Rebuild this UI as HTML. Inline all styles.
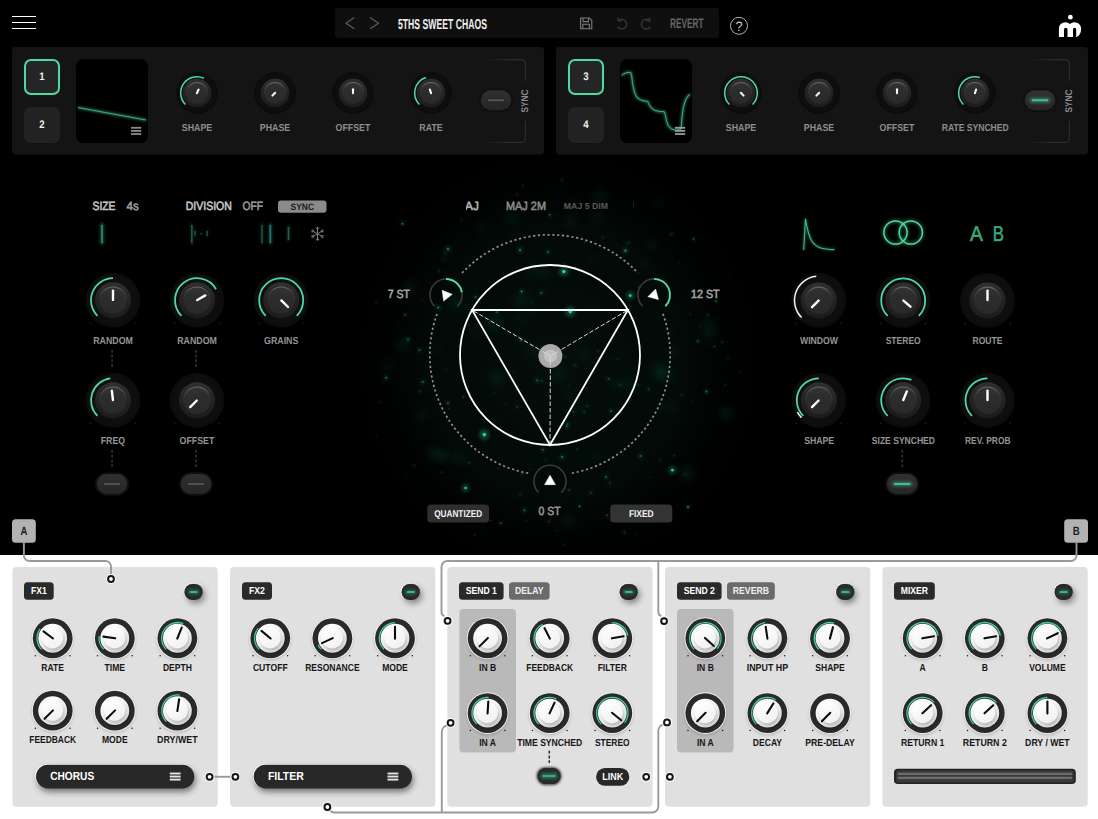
<!DOCTYPE html>
<html lang="en"><head><meta charset="utf-8"><title>Plugin UI</title>
<style>html,body{margin:0;padding:0;background:#fff;overflow:hidden}body{width:1098px;height:819px;font-family:"Liberation Sans",sans-serif}svg{display:block}text{white-space:pre}</style></head>
<body>
<svg width="1098" height="819" viewBox="0 0 1098 819" font-family="'Liberation Sans', sans-serif" text-rendering="geometricPrecision">
<defs>
<filter id="b1" x="-50%" y="-50%" width="200%" height="200%"><feGaussianBlur stdDeviation="1"/></filter>
<filter id="b2" x="-50%" y="-50%" width="200%" height="200%"><feGaussianBlur stdDeviation="1.6"/></filter>
<filter id="b3" x="-50%" y="-50%" width="200%" height="200%"><feGaussianBlur stdDeviation="3"/></filter>
<filter id="b6" x="-50%" y="-50%" width="200%" height="200%"><feGaussianBlur stdDeviation="6"/></filter>
<filter id="s1" x="-100%" y="-100%" width="300%" height="300%"><feGaussianBlur stdDeviation="0.7"/></filter>
<filter id="s2" x="-100%" y="-100%" width="300%" height="300%"><feGaussianBlur stdDeviation="1.8"/></filter>
<filter id="s3" x="-100%" y="-100%" width="300%" height="300%"><feGaussianBlur stdDeviation="4"/></filter>
<radialGradient id="dkOuter" cx="50%" cy="50%" r="50%"><stop offset="0" stop-color="#101010"/><stop offset="0.85" stop-color="#0e0e0e"/><stop offset="1" stop-color="#0b0b0b"/></radialGradient>
<linearGradient id="dkRing" x1="0" y1="0" x2="0" y2="1"><stop offset="0" stop-color="#303030"/><stop offset="0.5" stop-color="#232323"/><stop offset="1" stop-color="#1c1c1c"/></linearGradient>
<linearGradient id="dkRim" x1="0" y1="0" x2="0" y2="1"><stop offset="0" stop-color="#6a6a6a"/><stop offset="0.3" stop-color="#3c3c3c"/><stop offset="0.6" stop-color="#272727"/><stop offset="1" stop-color="#222222"/></linearGradient>
<linearGradient id="dkCap" x1="0" y1="0" x2="0" y2="1"><stop offset="0" stop-color="#343434"/><stop offset="0.3" stop-color="#2d2d2d"/><stop offset="1" stop-color="#292929"/></linearGradient>
<linearGradient id="tgFill" x1="0" y1="0" x2="0" y2="1"><stop offset="0" stop-color="#303030"/><stop offset="1" stop-color="#262626"/></linearGradient>
<linearGradient id="ltCap" x1="0.2" y1="0" x2="0.8" y2="1"><stop offset="0" stop-color="#ffffff"/><stop offset="0.55" stop-color="#ededed"/><stop offset="1" stop-color="#d2d2d2"/></linearGradient>
<linearGradient id="ltCapIn" x1="0.2" y1="0" x2="0.8" y2="1"><stop offset="0" stop-color="#ffffff"/><stop offset="1" stop-color="#f0f0f0"/></linearGradient>
<radialGradient id="nebula" cx="50%" cy="50%" r="50%"><stop offset="0" stop-color="#06140e" stop-opacity="0.7"/><stop offset="0.6" stop-color="#040f0b" stop-opacity="0.65"/><stop offset="1" stop-color="#000" stop-opacity="0"/></radialGradient>
<linearGradient id="brk" x1="0" y1="0" x2="1" y2="0"><stop offset="0" stop-color="#2c2c2c" stop-opacity="0"/><stop offset="0.6" stop-color="#2c2c2c"/><stop offset="1" stop-color="#2c2c2c"/></linearGradient>
<clipPath id="clipMaj"><rect x="466" y="195" width="80" height="22"/></clipPath>
</defs>
<rect x="0.00" y="0.00" width="1098.00" height="819.00" rx="0" fill="#ffffff" />
<rect x="0.00" y="0.00" width="1098.00" height="555.00" rx="0" fill="#000000" />
<clipPath id="clipNeb"><rect x="362" y="158" width="396" height="397"/></clipPath>
<g clip-path="url(#clipNeb)">
<ellipse cx="557" cy="362" rx="215" ry="225" fill="url(#nebula)"/>
<g fill="#2fd597">
<circle cx="563.8" cy="271.5" r="5.1" opacity="0.25" filter="url(#s2)"/>
<circle cx="563.8" cy="271.5" r="1.7" opacity="1.00" filter="url(#s1)"/>
<circle cx="570.3" cy="311.6" r="5.4" opacity="0.25" filter="url(#s2)"/>
<circle cx="570.3" cy="311.6" r="1.8" opacity="1.00" filter="url(#s1)"/>
<circle cx="630.2" cy="295.6" r="4.5" opacity="0.21" filter="url(#s2)"/>
<circle cx="630.2" cy="295.6" r="1.5" opacity="0.85" filter="url(#s1)"/>
<circle cx="484.3" cy="434.6" r="5.4" opacity="0.25" filter="url(#s2)"/>
<circle cx="484.3" cy="434.6" r="1.8" opacity="1.00" filter="url(#s1)"/>
<circle cx="672.4" cy="470.2" r="4.2" opacity="0.23" filter="url(#s2)"/>
<circle cx="672.4" cy="470.2" r="1.4" opacity="0.90" filter="url(#s1)"/>
<circle cx="465.6" cy="488.0" r="3.9" opacity="0.23" filter="url(#s2)"/>
<circle cx="465.6" cy="488.0" r="1.3" opacity="0.90" filter="url(#s1)"/>
<circle cx="521.6" cy="291.2" r="2.1" opacity="0.23" filter="url(#s2)"/>
<circle cx="521.6" cy="291.2" r="0.7" opacity="0.90" filter="url(#s1)"/>
<circle cx="625.4" cy="250.7" r="3.3" opacity="0.15" filter="url(#s2)"/>
<circle cx="625.4" cy="250.7" r="1.1" opacity="0.60" filter="url(#s1)"/>
<circle cx="402.5" cy="223.7" r="3.0" opacity="0.11" filter="url(#s2)"/>
<circle cx="402.5" cy="223.7" r="1.0" opacity="0.45" filter="url(#s1)"/>
<circle cx="422.7" cy="382.0" r="3.0" opacity="0.10" filter="url(#s2)"/>
<circle cx="422.7" cy="382.0" r="1.0" opacity="0.40" filter="url(#s1)"/>
<circle cx="408.0" cy="339.5" r="3.0" opacity="0.10" filter="url(#s2)"/>
<circle cx="408.0" cy="339.5" r="1.0" opacity="0.40" filter="url(#s1)"/>
<circle cx="706.4" cy="391.6" r="3.0" opacity="0.11" filter="url(#s2)"/>
<circle cx="706.4" cy="391.6" r="1.0" opacity="0.45" filter="url(#s1)"/>
<circle cx="697.8" cy="341.0" r="1.8" opacity="0.23" filter="url(#s2)"/>
<circle cx="697.8" cy="341.0" r="0.6" opacity="0.90" filter="url(#s1)"/>
<circle cx="579.5" cy="506.4" r="1.8" opacity="0.20" filter="url(#s2)"/>
<circle cx="579.5" cy="506.4" r="0.6" opacity="0.80" filter="url(#s1)"/>
<circle cx="611.0" cy="411.0" r="2.1" opacity="0.20" filter="url(#s2)"/>
<circle cx="611.0" cy="411.0" r="0.7" opacity="0.80" filter="url(#s1)"/>
<circle cx="497.0" cy="312.0" r="2.1" opacity="0.17" filter="url(#s2)"/>
<circle cx="497.0" cy="312.0" r="0.7" opacity="0.70" filter="url(#s1)"/>
<circle cx="688.0" cy="507.0" r="2.4" opacity="0.20" filter="url(#s2)"/>
<circle cx="688.0" cy="507.0" r="0.8" opacity="0.80" filter="url(#s1)"/>
<circle cx="606.0" cy="477.0" r="2.1" opacity="0.17" filter="url(#s2)"/>
<circle cx="606.0" cy="477.0" r="0.7" opacity="0.70" filter="url(#s1)"/>
<circle cx="448.0" cy="403.0" r="2.1" opacity="0.17" filter="url(#s2)"/>
<circle cx="448.0" cy="403.0" r="0.7" opacity="0.70" filter="url(#s1)"/>
<circle cx="548.0" cy="252.0" r="2.4" opacity="0.15" filter="url(#s2)"/>
<circle cx="548.0" cy="252.0" r="0.8" opacity="0.60" filter="url(#s1)"/>
<circle cx="448.0" cy="249.0" r="3.3" opacity="0.14" filter="url(#s2)"/>
<circle cx="448.0" cy="249.0" r="1.1" opacity="0.55" filter="url(#s1)"/>
<circle cx="520.0" cy="250.0" r="3.0" opacity="0.15" filter="url(#s2)"/>
<circle cx="520.0" cy="250.0" r="1.0" opacity="0.60" filter="url(#s1)"/>
<circle cx="542.1" cy="381.0" r="2.4" opacity="0.07" filter="url(#s2)"/>
<circle cx="542.1" cy="381.0" r="0.8" opacity="0.29" filter="url(#s1)"/>
<circle cx="693.5" cy="238.9" r="3.0" opacity="0.08" filter="url(#s2)"/>
<circle cx="693.5" cy="238.9" r="1.0" opacity="0.30" filter="url(#s1)"/>
<circle cx="602.8" cy="237.5" r="2.4" opacity="0.06" filter="url(#s2)"/>
<circle cx="602.8" cy="237.5" r="0.8" opacity="0.24" filter="url(#s1)"/>
<circle cx="406.1" cy="476.9" r="1.2" opacity="0.09" filter="url(#s2)"/>
<circle cx="406.1" cy="476.9" r="0.4" opacity="0.35" filter="url(#s1)"/>
<circle cx="521.0" cy="340.0" r="3.0" opacity="0.09" filter="url(#s2)"/>
<circle cx="521.0" cy="340.0" r="1.0" opacity="0.37" filter="url(#s1)"/>
<circle cx="606.3" cy="485.4" r="1.2" opacity="0.04" filter="url(#s2)"/>
<circle cx="606.3" cy="485.4" r="0.4" opacity="0.14" filter="url(#s1)"/>
<circle cx="443.5" cy="258.9" r="1.2" opacity="0.10" filter="url(#s2)"/>
<circle cx="443.5" cy="258.9" r="0.4" opacity="0.42" filter="url(#s1)"/>
<circle cx="494.7" cy="392.9" r="1.5" opacity="0.08" filter="url(#s2)"/>
<circle cx="494.7" cy="392.9" r="0.5" opacity="0.32" filter="url(#s1)"/>
<circle cx="612.7" cy="357.9" r="1.2" opacity="0.07" filter="url(#s2)"/>
<circle cx="612.7" cy="357.9" r="0.4" opacity="0.29" filter="url(#s1)"/>
<circle cx="638.1" cy="287.1" r="1.5" opacity="0.08" filter="url(#s2)"/>
<circle cx="638.1" cy="287.1" r="0.5" opacity="0.31" filter="url(#s1)"/>
<circle cx="383.2" cy="382.2" r="1.2" opacity="0.07" filter="url(#s2)"/>
<circle cx="383.2" cy="382.2" r="0.4" opacity="0.27" filter="url(#s1)"/>
<circle cx="690.3" cy="314.4" r="1.2" opacity="0.11" filter="url(#s2)"/>
<circle cx="690.3" cy="314.4" r="0.4" opacity="0.44" filter="url(#s1)"/>
<circle cx="714.3" cy="346.5" r="2.4" opacity="0.07" filter="url(#s2)"/>
<circle cx="714.3" cy="346.5" r="0.8" opacity="0.28" filter="url(#s1)"/>
<circle cx="584.9" cy="242.2" r="1.8" opacity="0.06" filter="url(#s2)"/>
<circle cx="584.9" cy="242.2" r="0.6" opacity="0.25" filter="url(#s1)"/>
<circle cx="526.2" cy="520.4" r="1.5" opacity="0.05" filter="url(#s2)"/>
<circle cx="526.2" cy="520.4" r="0.5" opacity="0.21" filter="url(#s1)"/>
<circle cx="671.7" cy="234.2" r="3.0" opacity="0.05" filter="url(#s2)"/>
<circle cx="671.7" cy="234.2" r="1.0" opacity="0.19" filter="url(#s1)"/>
<circle cx="563.3" cy="544.3" r="1.5" opacity="0.07" filter="url(#s2)"/>
<circle cx="563.3" cy="544.3" r="0.5" opacity="0.28" filter="url(#s1)"/>
<circle cx="516.3" cy="317.6" r="1.5" opacity="0.03" filter="url(#s2)"/>
<circle cx="516.3" cy="317.6" r="0.5" opacity="0.12" filter="url(#s1)"/>
<circle cx="594.9" cy="549.2" r="1.2" opacity="0.05" filter="url(#s2)"/>
<circle cx="594.9" cy="549.2" r="0.4" opacity="0.20" filter="url(#s1)"/>
<circle cx="520.2" cy="494.1" r="3.0" opacity="0.04" filter="url(#s2)"/>
<circle cx="520.2" cy="494.1" r="1.0" opacity="0.16" filter="url(#s1)"/>
<circle cx="469.1" cy="462.7" r="1.8" opacity="0.11" filter="url(#s2)"/>
<circle cx="469.1" cy="462.7" r="0.6" opacity="0.44" filter="url(#s1)"/>
<circle cx="517.2" cy="194.5" r="1.5" opacity="0.09" filter="url(#s2)"/>
<circle cx="517.2" cy="194.5" r="0.5" opacity="0.34" filter="url(#s1)"/>
<circle cx="463.4" cy="396.9" r="1.8" opacity="0.09" filter="url(#s2)"/>
<circle cx="463.4" cy="396.9" r="0.6" opacity="0.36" filter="url(#s1)"/>
<circle cx="419.8" cy="391.5" r="3.0" opacity="0.04" filter="url(#s2)"/>
<circle cx="419.8" cy="391.5" r="1.0" opacity="0.17" filter="url(#s1)"/>
<circle cx="517.2" cy="406.9" r="1.8" opacity="0.12" filter="url(#s2)"/>
<circle cx="517.2" cy="406.9" r="0.6" opacity="0.47" filter="url(#s1)"/>
<circle cx="679.5" cy="261.8" r="1.5" opacity="0.05" filter="url(#s2)"/>
<circle cx="679.5" cy="261.8" r="0.5" opacity="0.18" filter="url(#s1)"/>
<circle cx="608.5" cy="378.7" r="2.4" opacity="0.11" filter="url(#s2)"/>
<circle cx="608.5" cy="378.7" r="0.8" opacity="0.46" filter="url(#s1)"/>
<circle cx="598.9" cy="327.8" r="1.2" opacity="0.04" filter="url(#s2)"/>
<circle cx="598.9" cy="327.8" r="0.4" opacity="0.16" filter="url(#s1)"/>
<circle cx="564.6" cy="264.0" r="2.4" opacity="0.05" filter="url(#s2)"/>
<circle cx="564.6" cy="264.0" r="0.8" opacity="0.22" filter="url(#s1)"/>
<circle cx="681.7" cy="395.0" r="1.8" opacity="0.08" filter="url(#s2)"/>
<circle cx="681.7" cy="395.0" r="0.6" opacity="0.32" filter="url(#s1)"/>
<circle cx="419.5" cy="350.1" r="3.0" opacity="0.09" filter="url(#s2)"/>
<circle cx="419.5" cy="350.1" r="1.0" opacity="0.35" filter="url(#s1)"/>
<circle cx="477.4" cy="518.3" r="1.5" opacity="0.10" filter="url(#s2)"/>
<circle cx="477.4" cy="518.3" r="0.5" opacity="0.40" filter="url(#s1)"/>
<circle cx="398.0" cy="324.0" r="1.5" opacity="0.04" filter="url(#s2)"/>
<circle cx="398.0" cy="324.0" r="0.5" opacity="0.14" filter="url(#s1)"/>
<circle cx="438.3" cy="307.6" r="3.0" opacity="0.12" filter="url(#s2)"/>
<circle cx="438.3" cy="307.6" r="1.0" opacity="0.49" filter="url(#s1)"/>
<circle cx="541.3" cy="293.1" r="3.0" opacity="0.09" filter="url(#s2)"/>
<circle cx="541.3" cy="293.1" r="1.0" opacity="0.34" filter="url(#s1)"/>
<circle cx="635.6" cy="535.7" r="1.2" opacity="0.09" filter="url(#s2)"/>
<circle cx="635.6" cy="535.7" r="0.4" opacity="0.35" filter="url(#s1)"/>
<circle cx="489.0" cy="218.5" r="1.2" opacity="0.04" filter="url(#s2)"/>
<circle cx="489.0" cy="218.5" r="0.4" opacity="0.15" filter="url(#s1)"/>
<circle cx="577.3" cy="449.0" r="1.5" opacity="0.11" filter="url(#s2)"/>
<circle cx="577.3" cy="449.0" r="0.5" opacity="0.42" filter="url(#s1)"/>
<circle cx="716.0" cy="301.1" r="2.4" opacity="0.12" filter="url(#s2)"/>
<circle cx="716.0" cy="301.1" r="0.8" opacity="0.46" filter="url(#s1)"/>
<circle cx="699.5" cy="326.2" r="1.2" opacity="0.11" filter="url(#s2)"/>
<circle cx="699.5" cy="326.2" r="0.4" opacity="0.45" filter="url(#s1)"/>
<circle cx="587.4" cy="406.0" r="2.4" opacity="0.07" filter="url(#s2)"/>
<circle cx="587.4" cy="406.0" r="0.8" opacity="0.26" filter="url(#s1)"/>
<circle cx="468.7" cy="325.8" r="1.8" opacity="0.07" filter="url(#s2)"/>
<circle cx="468.7" cy="325.8" r="0.6" opacity="0.27" filter="url(#s1)"/>
<circle cx="648.4" cy="389.1" r="2.4" opacity="0.07" filter="url(#s2)"/>
<circle cx="648.4" cy="389.1" r="0.8" opacity="0.30" filter="url(#s1)"/>
<circle cx="575.5" cy="365.2" r="3.0" opacity="0.03" filter="url(#s2)"/>
<circle cx="575.5" cy="365.2" r="1.0" opacity="0.13" filter="url(#s1)"/>
<circle cx="598.1" cy="350.7" r="1.5" opacity="0.12" filter="url(#s2)"/>
<circle cx="598.1" cy="350.7" r="0.5" opacity="0.48" filter="url(#s1)"/>
<circle cx="414.4" cy="465.5" r="2.4" opacity="0.05" filter="url(#s2)"/>
<circle cx="414.4" cy="465.5" r="0.8" opacity="0.22" filter="url(#s1)"/>
<circle cx="627.0" cy="243.8" r="1.5" opacity="0.10" filter="url(#s2)"/>
<circle cx="627.0" cy="243.8" r="0.5" opacity="0.41" filter="url(#s1)"/>
<circle cx="500.8" cy="523.2" r="2.4" opacity="0.11" filter="url(#s2)"/>
<circle cx="500.8" cy="523.2" r="0.8" opacity="0.46" filter="url(#s1)"/>
<circle cx="494.9" cy="421.7" r="1.5" opacity="0.09" filter="url(#s2)"/>
<circle cx="494.9" cy="421.7" r="0.5" opacity="0.36" filter="url(#s1)"/>
<circle cx="674.2" cy="455.8" r="1.5" opacity="0.11" filter="url(#s2)"/>
<circle cx="674.2" cy="455.8" r="0.5" opacity="0.45" filter="url(#s1)"/>
<circle cx="516.5" cy="389.9" r="1.8" opacity="0.05" filter="url(#s2)"/>
<circle cx="516.5" cy="389.9" r="0.6" opacity="0.20" filter="url(#s1)"/>
<circle cx="422.6" cy="300.7" r="1.2" opacity="0.10" filter="url(#s2)"/>
<circle cx="422.6" cy="300.7" r="0.4" opacity="0.39" filter="url(#s1)"/>
<circle cx="729.2" cy="272.3" r="1.5" opacity="0.04" filter="url(#s2)"/>
<circle cx="729.2" cy="272.3" r="0.5" opacity="0.16" filter="url(#s1)"/>
<circle cx="549.2" cy="521.5" r="2.4" opacity="0.07" filter="url(#s2)"/>
<circle cx="549.2" cy="521.5" r="0.8" opacity="0.27" filter="url(#s1)"/>
<circle cx="567.5" cy="424.1" r="3.0" opacity="0.07" filter="url(#s2)"/>
<circle cx="567.5" cy="424.1" r="1.0" opacity="0.29" filter="url(#s1)"/>
<circle cx="638.4" cy="385.1" r="1.8" opacity="0.09" filter="url(#s2)"/>
<circle cx="638.4" cy="385.1" r="0.6" opacity="0.37" filter="url(#s1)"/>
<circle cx="584.1" cy="412.1" r="2.4" opacity="0.07" filter="url(#s2)"/>
<circle cx="584.1" cy="412.1" r="0.8" opacity="0.29" filter="url(#s1)"/>
<circle cx="461.3" cy="220.1" r="1.2" opacity="0.12" filter="url(#s2)"/>
<circle cx="461.3" cy="220.1" r="0.4" opacity="0.49" filter="url(#s1)"/>
<circle cx="573.3" cy="411.7" r="1.8" opacity="0.12" filter="url(#s2)"/>
<circle cx="573.3" cy="411.7" r="0.6" opacity="0.48" filter="url(#s1)"/>
<circle cx="629.4" cy="242.5" r="2.4" opacity="0.05" filter="url(#s2)"/>
<circle cx="629.4" cy="242.5" r="0.8" opacity="0.22" filter="url(#s1)"/>
<circle cx="640.5" cy="455.9" r="3.0" opacity="0.10" filter="url(#s2)"/>
<circle cx="640.5" cy="455.9" r="1.0" opacity="0.39" filter="url(#s1)"/>
<circle cx="439.3" cy="270.6" r="1.8" opacity="0.08" filter="url(#s2)"/>
<circle cx="439.3" cy="270.6" r="0.6" opacity="0.33" filter="url(#s1)"/>
<circle cx="728.0" cy="358.2" r="1.5" opacity="0.07" filter="url(#s2)"/>
<circle cx="728.0" cy="358.2" r="0.5" opacity="0.27" filter="url(#s1)"/>
<circle cx="669.8" cy="514.0" r="1.2" opacity="0.07" filter="url(#s2)"/>
<circle cx="669.8" cy="514.0" r="0.4" opacity="0.28" filter="url(#s1)"/>
<circle cx="707.6" cy="315.0" r="2.4" opacity="0.07" filter="url(#s2)"/>
<circle cx="707.6" cy="315.0" r="0.8" opacity="0.29" filter="url(#s1)"/>
<circle cx="607.2" cy="515.4" r="2.4" opacity="0.08" filter="url(#s2)"/>
<circle cx="607.2" cy="515.4" r="0.8" opacity="0.33" filter="url(#s1)"/>
<circle cx="617.4" cy="359.0" r="1.8" opacity="0.07" filter="url(#s2)"/>
<circle cx="617.4" cy="359.0" r="0.6" opacity="0.30" filter="url(#s1)"/>
<circle cx="616.9" cy="244.7" r="1.2" opacity="0.05" filter="url(#s2)"/>
<circle cx="616.9" cy="244.7" r="0.4" opacity="0.20" filter="url(#s1)"/>
<circle cx="739.5" cy="372.2" r="1.8" opacity="0.05" filter="url(#s2)"/>
<circle cx="739.5" cy="372.2" r="0.6" opacity="0.22" filter="url(#s1)"/>
<circle cx="561.8" cy="180.3" r="1.8" opacity="0.08" filter="url(#s2)"/>
<circle cx="561.8" cy="180.3" r="0.6" opacity="0.33" filter="url(#s1)"/>
<circle cx="660.9" cy="353.2" r="1.2" opacity="0.05" filter="url(#s2)"/>
<circle cx="660.9" cy="353.2" r="0.4" opacity="0.20" filter="url(#s1)"/>
<circle cx="698.2" cy="330.7" r="1.2" opacity="0.05" filter="url(#s2)"/>
<circle cx="698.2" cy="330.7" r="0.4" opacity="0.19" filter="url(#s1)"/>
<circle cx="498.0" cy="468.6" r="1.5" opacity="0.07" filter="url(#s2)"/>
<circle cx="498.0" cy="468.6" r="0.5" opacity="0.30" filter="url(#s1)"/>
<circle cx="566.8" cy="426.3" r="2.4" opacity="0.12" filter="url(#s2)"/>
<circle cx="566.8" cy="426.3" r="0.8" opacity="0.48" filter="url(#s1)"/>
<circle cx="557.2" cy="530.5" r="1.2" opacity="0.10" filter="url(#s2)"/>
<circle cx="557.2" cy="530.5" r="0.4" opacity="0.41" filter="url(#s1)"/>
<circle cx="537.2" cy="380.6" r="3.0" opacity="0.09" filter="url(#s2)"/>
<circle cx="537.2" cy="380.6" r="1.0" opacity="0.36" filter="url(#s1)"/>
<circle cx="568.6" cy="490.0" r="3.0" opacity="0.05" filter="url(#s2)"/>
<circle cx="568.6" cy="490.0" r="1.0" opacity="0.22" filter="url(#s1)"/>
<circle cx="624.4" cy="532.6" r="3.0" opacity="0.05" filter="url(#s2)"/>
<circle cx="624.4" cy="532.6" r="1.0" opacity="0.20" filter="url(#s1)"/>
<circle cx="569.1" cy="386.0" r="1.5" opacity="0.07" filter="url(#s2)"/>
<circle cx="569.1" cy="386.0" r="0.5" opacity="0.28" filter="url(#s1)"/>
<circle cx="513.8" cy="372.7" r="1.2" opacity="0.08" filter="url(#s2)"/>
<circle cx="513.8" cy="372.7" r="0.4" opacity="0.32" filter="url(#s1)"/>
<circle cx="522.6" cy="473.6" r="3.0" opacity="0.04" filter="url(#s2)"/>
<circle cx="522.6" cy="473.6" r="1.0" opacity="0.17" filter="url(#s1)"/>
<circle cx="722.0" cy="342.2" r="2.4" opacity="0.06" filter="url(#s2)"/>
<circle cx="722.0" cy="342.2" r="0.8" opacity="0.22" filter="url(#s1)"/>
<circle cx="549.9" cy="214.8" r="2.4" opacity="0.12" filter="url(#s2)"/>
<circle cx="549.9" cy="214.8" r="0.8" opacity="0.46" filter="url(#s1)"/>
<circle cx="569.4" cy="207.7" r="2.4" opacity="0.09" filter="url(#s2)"/>
<circle cx="569.4" cy="207.7" r="0.8" opacity="0.35" filter="url(#s1)"/>
<circle cx="445.0" cy="253.3" r="1.8" opacity="0.06" filter="url(#s2)"/>
<circle cx="445.0" cy="253.3" r="0.6" opacity="0.24" filter="url(#s1)"/>
<circle cx="505.6" cy="404.0" r="1.2" opacity="0.08" filter="url(#s2)"/>
<circle cx="505.6" cy="404.0" r="0.4" opacity="0.31" filter="url(#s1)"/>
<circle cx="590.9" cy="493.1" r="3.0" opacity="0.05" filter="url(#s2)"/>
<circle cx="590.9" cy="493.1" r="1.0" opacity="0.22" filter="url(#s1)"/>
<circle cx="446.3" cy="369.7" r="2.4" opacity="0.03" filter="url(#s2)"/>
<circle cx="446.3" cy="369.7" r="0.8" opacity="0.13" filter="url(#s1)"/>
<circle cx="610.0" cy="482.9" r="3.0" opacity="0.05" filter="url(#s2)"/>
<circle cx="610.0" cy="482.9" r="1.0" opacity="0.18" filter="url(#s1)"/>
<circle cx="448.8" cy="408.4" r="1.5" opacity="0.08" filter="url(#s2)"/>
<circle cx="448.8" cy="408.4" r="0.5" opacity="0.32" filter="url(#s1)"/>
<circle cx="692.1" cy="400.9" r="1.5" opacity="0.05" filter="url(#s2)"/>
<circle cx="692.1" cy="400.9" r="0.5" opacity="0.21" filter="url(#s1)"/>
<circle cx="650.5" cy="477.2" r="1.5" opacity="0.06" filter="url(#s2)"/>
<circle cx="650.5" cy="477.2" r="0.5" opacity="0.24" filter="url(#s1)"/>
<circle cx="490.4" cy="520.3" r="1.5" opacity="0.10" filter="url(#s2)"/>
<circle cx="490.4" cy="520.3" r="0.5" opacity="0.42" filter="url(#s1)"/>
<circle cx="445.1" cy="203.2" r="1.5" opacity="0.04" filter="url(#s2)"/>
<circle cx="445.1" cy="203.2" r="0.5" opacity="0.17" filter="url(#s1)"/>
<circle cx="405.1" cy="315.0" r="2.4" opacity="0.11" filter="url(#s2)"/>
<circle cx="405.1" cy="315.0" r="0.8" opacity="0.44" filter="url(#s1)"/>
<circle cx="530.5" cy="469.3" r="1.5" opacity="0.05" filter="url(#s2)"/>
<circle cx="530.5" cy="469.3" r="0.5" opacity="0.20" filter="url(#s1)"/>
<circle cx="608.1" cy="472.8" r="1.2" opacity="0.05" filter="url(#s2)"/>
<circle cx="608.1" cy="472.8" r="0.4" opacity="0.20" filter="url(#s1)"/>
<circle cx="628.6" cy="516.0" r="1.8" opacity="0.04" filter="url(#s2)"/>
<circle cx="628.6" cy="516.0" r="0.6" opacity="0.16" filter="url(#s1)"/>
<circle cx="562.1" cy="457.1" r="3.0" opacity="0.12" filter="url(#s2)"/>
<circle cx="562.1" cy="457.1" r="1.0" opacity="0.50" filter="url(#s1)"/>
<circle cx="685.2" cy="474.3" r="2.4" opacity="0.04" filter="url(#s2)"/>
<circle cx="685.2" cy="474.3" r="0.8" opacity="0.16" filter="url(#s1)"/>
<circle cx="386.1" cy="377.8" r="3.0" opacity="0.12" filter="url(#s2)"/>
<circle cx="386.1" cy="377.8" r="1.0" opacity="0.46" filter="url(#s1)"/>
<circle cx="553.0" cy="238.8" r="1.2" opacity="0.05" filter="url(#s2)"/>
<circle cx="553.0" cy="238.8" r="0.4" opacity="0.20" filter="url(#s1)"/>
<circle cx="545.7" cy="459.7" r="1.8" opacity="0.07" filter="url(#s2)"/>
<circle cx="545.7" cy="459.7" r="0.6" opacity="0.27" filter="url(#s1)"/>
<circle cx="532.3" cy="302.2" r="1.5" opacity="0.09" filter="url(#s2)"/>
<circle cx="532.3" cy="302.2" r="0.5" opacity="0.35" filter="url(#s1)"/>
<circle cx="377.0" cy="435.2" r="1.5" opacity="0.05" filter="url(#s2)"/>
<circle cx="377.0" cy="435.2" r="0.5" opacity="0.19" filter="url(#s1)"/>
<circle cx="542.7" cy="449.9" r="2.4" opacity="0.12" filter="url(#s2)"/>
<circle cx="542.7" cy="449.9" r="0.8" opacity="0.47" filter="url(#s1)"/>
<circle cx="599.4" cy="202.4" r="1.2" opacity="0.06" filter="url(#s2)"/>
<circle cx="599.4" cy="202.4" r="0.4" opacity="0.24" filter="url(#s1)"/>
<circle cx="725.3" cy="384.8" r="1.5" opacity="0.08" filter="url(#s2)"/>
<circle cx="725.3" cy="384.8" r="0.5" opacity="0.31" filter="url(#s1)"/>
<circle cx="469.1" cy="515.9" r="1.5" opacity="0.11" filter="url(#s2)"/>
<circle cx="469.1" cy="515.9" r="0.5" opacity="0.43" filter="url(#s1)"/>
<circle cx="524.5" cy="510.3" r="3.0" opacity="0.10" filter="url(#s2)"/>
<circle cx="524.5" cy="510.3" r="1.0" opacity="0.38" filter="url(#s1)"/>
<circle cx="660.5" cy="459.8" r="2.4" opacity="0.05" filter="url(#s2)"/>
<circle cx="660.5" cy="459.8" r="0.8" opacity="0.20" filter="url(#s1)"/>
<circle cx="441.5" cy="472.2" r="1.8" opacity="0.07" filter="url(#s2)"/>
<circle cx="441.5" cy="472.2" r="0.6" opacity="0.30" filter="url(#s1)"/>
<circle cx="376.0" cy="302.6" r="3.0" opacity="0.03" filter="url(#s2)"/>
<circle cx="376.0" cy="302.6" r="1.0" opacity="0.14" filter="url(#s1)"/>
<circle cx="474.6" cy="535.2" r="1.8" opacity="0.06" filter="url(#s2)"/>
<circle cx="474.6" cy="535.2" r="0.6" opacity="0.25" filter="url(#s1)"/>
<circle cx="620.1" cy="384.7" r="3.0" opacity="0.04" filter="url(#s2)"/>
<circle cx="620.1" cy="384.7" r="1.0" opacity="0.15" filter="url(#s1)"/>
<circle cx="565.5" cy="357.1" r="1.5" opacity="0.10" filter="url(#s2)"/>
<circle cx="565.5" cy="357.1" r="0.5" opacity="0.39" filter="url(#s1)"/>
<circle cx="380.6" cy="402.3" r="1.5" opacity="0.05" filter="url(#s2)"/>
<circle cx="380.6" cy="402.3" r="0.5" opacity="0.22" filter="url(#s1)"/>
<circle cx="523.0" cy="185.4" r="1.5" opacity="0.09" filter="url(#s2)"/>
<circle cx="523.0" cy="185.4" r="0.5" opacity="0.37" filter="url(#s1)"/>
<circle cx="475.7" cy="296.9" r="3.0" opacity="0.08" filter="url(#s2)"/>
<circle cx="475.7" cy="296.9" r="1.0" opacity="0.31" filter="url(#s1)"/>
<circle cx="735.6" cy="384.1" r="1.2" opacity="0.09" filter="url(#s2)"/>
<circle cx="735.6" cy="384.1" r="0.4" opacity="0.36" filter="url(#s1)"/>
</g>
<g fill="#1a8a62">
<circle cx="595.1" cy="455.9" r="3.2" opacity="0.14" filter="url(#s3)"/>
<circle cx="437.6" cy="349.6" r="3.8" opacity="0.10" filter="url(#s3)"/>
<circle cx="600.0" cy="196.7" r="7.7" opacity="0.09" filter="url(#s3)"/>
<circle cx="569.6" cy="396.2" r="4.8" opacity="0.08" filter="url(#s3)"/>
<circle cx="615.8" cy="382.4" r="4.4" opacity="0.12" filter="url(#s3)"/>
<circle cx="436.4" cy="454.2" r="4.9" opacity="0.14" filter="url(#s3)"/>
<circle cx="534.6" cy="351.7" r="7.9" opacity="0.07" filter="url(#s3)"/>
<circle cx="568.4" cy="521.8" r="6.6" opacity="0.10" filter="url(#s3)"/>
<circle cx="597.3" cy="217.6" r="6.1" opacity="0.10" filter="url(#s3)"/>
<circle cx="570.1" cy="221.0" r="5.2" opacity="0.12" filter="url(#s3)"/>
<circle cx="544.0" cy="272.0" r="5.9" opacity="0.09" filter="url(#s3)"/>
<circle cx="660.1" cy="371.4" r="8.0" opacity="0.15" filter="url(#s3)"/>
<circle cx="644.3" cy="263.2" r="3.6" opacity="0.14" filter="url(#s3)"/>
<circle cx="662.4" cy="406.2" r="4.8" opacity="0.08" filter="url(#s3)"/>
<circle cx="626.6" cy="384.0" r="6.0" opacity="0.11" filter="url(#s3)"/>
<circle cx="651.2" cy="245.2" r="4.2" opacity="0.15" filter="url(#s3)"/>
<circle cx="477.5" cy="332.3" r="6.1" opacity="0.06" filter="url(#s3)"/>
<circle cx="575.0" cy="201.8" r="3.4" opacity="0.12" filter="url(#s3)"/>
<circle cx="578.2" cy="408.5" r="4.9" opacity="0.10" filter="url(#s3)"/>
<circle cx="455.8" cy="302.2" r="6.7" opacity="0.13" filter="url(#s3)"/>
<circle cx="671.3" cy="405.8" r="6.8" opacity="0.07" filter="url(#s3)"/>
<circle cx="532.8" cy="270.5" r="7.0" opacity="0.09" filter="url(#s3)"/>
<circle cx="497.1" cy="378.0" r="6.7" opacity="0.14" filter="url(#s3)"/>
<circle cx="534.0" cy="311.6" r="3.5" opacity="0.14" filter="url(#s3)"/>
<circle cx="583.1" cy="354.4" r="6.4" opacity="0.08" filter="url(#s3)"/>
<circle cx="659.2" cy="203.1" r="4.1" opacity="0.12" filter="url(#s3)"/>
<circle cx="409.4" cy="287.4" r="6.6" opacity="0.12" filter="url(#s3)"/>
<circle cx="481.8" cy="227.9" r="4.8" opacity="0.12" filter="url(#s3)"/>
<circle cx="511.9" cy="218.4" r="6.5" opacity="0.11" filter="url(#s3)"/>
<circle cx="708.8" cy="337.1" r="7.0" opacity="0.08" filter="url(#s3)"/>
<circle cx="494.3" cy="322.8" r="7.7" opacity="0.14" filter="url(#s3)"/>
<circle cx="469.4" cy="308.8" r="4.8" opacity="0.09" filter="url(#s3)"/>
<circle cx="522.4" cy="318.4" r="4.0" opacity="0.11" filter="url(#s3)"/>
<circle cx="666.9" cy="375.0" r="7.2" opacity="0.11" filter="url(#s3)"/>
<circle cx="443.6" cy="455.8" r="7.4" opacity="0.08" filter="url(#s3)"/>
<circle cx="388.0" cy="365.8" r="5.7" opacity="0.11" filter="url(#s3)"/>
<circle cx="727.9" cy="415.9" r="7.0" opacity="0.06" filter="url(#s3)"/>
<circle cx="576.9" cy="466.6" r="3.4" opacity="0.06" filter="url(#s3)"/>
<circle cx="645.3" cy="507.7" r="3.4" opacity="0.11" filter="url(#s3)"/>
<circle cx="431.8" cy="450.9" r="6.2" opacity="0.07" filter="url(#s3)"/>
<circle cx="459.4" cy="458.2" r="5.6" opacity="0.13" filter="url(#s3)"/>
<circle cx="522.0" cy="300.0" r="7.8" opacity="0.12" filter="url(#s3)"/>
<circle cx="557.7" cy="373.8" r="6.6" opacity="0.12" filter="url(#s3)"/>
<circle cx="709.4" cy="326.9" r="7.1" opacity="0.12" filter="url(#s3)"/>
<circle cx="687.3" cy="473.2" r="7.2" opacity="0.14" filter="url(#s3)"/>
<circle cx="724.8" cy="411.9" r="5.6" opacity="0.12" filter="url(#s3)"/>
<circle cx="668.8" cy="331.0" r="5.1" opacity="0.06" filter="url(#s3)"/>
<circle cx="515.2" cy="237.0" r="4.0" opacity="0.09" filter="url(#s3)"/>
<circle cx="485.1" cy="533.8" r="3.3" opacity="0.08" filter="url(#s3)"/>
<circle cx="421.3" cy="414.8" r="6.9" opacity="0.07" filter="url(#s3)"/>
<circle cx="402.4" cy="344.7" r="5.9" opacity="0.14" filter="url(#s3)"/>
<circle cx="446.4" cy="255.4" r="4.2" opacity="0.12" filter="url(#s3)"/>
<circle cx="594.1" cy="257.9" r="3.9" opacity="0.08" filter="url(#s3)"/>
<circle cx="442.1" cy="455.3" r="4.6" opacity="0.10" filter="url(#s3)"/>
<circle cx="674.2" cy="352.4" r="4.3" opacity="0.14" filter="url(#s3)"/>
</g></g>
<line x1="12.00" y1="16.50" x2="36.00" y2="16.50" stroke="#ffffff" stroke-width="1.05" />
<line x1="12.00" y1="22.50" x2="36.00" y2="22.50" stroke="#ffffff" stroke-width="1.05" />
<line x1="12.00" y1="28.50" x2="36.00" y2="28.50" stroke="#ffffff" stroke-width="1.05" />
<rect x="335.00" y="8.00" width="384.00" height="30.00" rx="3" fill="#0f0f0f" />
<path d="M354.3 17.6L346 23.2L354.3 28.8" fill="none" stroke="#5e5e5e" stroke-width="1.15"/>
<path d="M370.2 17.6L378.5 23.2L370.2 28.8" fill="none" stroke="#5e5e5e" stroke-width="1.15"/>
<text x="398.00" y="28.56" font-size="14.4" fill="#efefef" font-weight="700" text-anchor="start" textLength="89.00" lengthAdjust="spacingAndGlyphs" >5THS SWEET CHAOS</text>
<g fill="none" stroke="#7d7d7d" stroke-width="1.1"><path d="M580.6 18h8.8l2.4 2.4v8.4h-11.2z"/><path d="M583 18v3.6h5.4V18"/><path d="M582.8 28.8v-4.6h6.6v4.6"/></g>
<g fill="none" stroke="#3c3c3c" stroke-width="1.2"><path d="M618.6 20.6A4.8 4.8 0 1 1 617.6 26.6"/><path d="M618.2 17.4v3.6h3.6"/><path d="M649.4 20.6A4.8 4.8 0 1 0 650.4 26.6"/><path d="M649.8 17.4v3.6h-3.6"/></g>
<text x="670.00" y="28.34" font-size="13.8" fill="#666666" font-weight="700" text-anchor="start" textLength="33.50" lengthAdjust="spacingAndGlyphs" >REVERT</text>
<circle cx="739.00" cy="25.80" r="8.5" fill="none" stroke="#b0b0b0" stroke-width="1.0"/>
<text x="739.10" y="30.73" font-size="13.5" fill="#d0d0d0" font-weight="400" text-anchor="middle" textLength="7.13" lengthAdjust="spacingAndGlyphs" >?</text>
<g fill="#ffffff"><circle cx="1070.4" cy="17.15" r="2.35"/><path d="M1058.9 37.1V28.7A6.5 6.5 0 0 1 1069.85 24A6.7 6.7 0 0 1 1081.1 28.9C1081.1 33 1079 36.2 1076.3 37.1H1076.2V29.4a1.6 1.6 0 0 0 -3.2 0V37.1H1067.5V29.4a1.75 1.75 0 0 0 -3.5 0V37.1Z"/></g>
<rect x="12.00" y="47.00" width="532.00" height="107.50" rx="3.5" fill="#141414" />
<rect x="25.00" y="60.00" width="34.00" height="34.00" rx="6" fill="#252525" stroke="#4ddba0" stroke-width="2"/>
<rect x="24.00" y="107.00" width="36.00" height="36.00" rx="6" fill="#222222" />
<text x="42.00" y="80.44" font-size="11" fill="#f0f0f0" font-weight="700" text-anchor="middle" textLength="5.38" lengthAdjust="spacingAndGlyphs" >1</text>
<text x="42.00" y="128.44" font-size="11" fill="#f0f0f0" font-weight="700" text-anchor="middle" textLength="5.38" lengthAdjust="spacingAndGlyphs" >2</text>
<rect x="76.00" y="59.00" width="72.00" height="84.00" rx="7" fill="#000000" />
<path d="M78 107.6L146 120" fill="none" stroke="#4ddba0" stroke-width="3" opacity="0.4" filter="url(#b1)" stroke-linejoin="round"/>
<path d="M78 107.6L146 120" fill="none" stroke="#41bd8d" stroke-width="0.85" stroke-linejoin="round"/>
<line x1="131.00" y1="127.80" x2="141.20" y2="127.80" stroke="#8c8c8c" stroke-width="1.8" />
<line x1="131.00" y1="130.90" x2="141.20" y2="130.90" stroke="#8c8c8c" stroke-width="1.8" />
<line x1="131.00" y1="134.00" x2="141.20" y2="134.00" stroke="#8c8c8c" stroke-width="1.8" />
<rect x="556.00" y="47.00" width="532.00" height="107.50" rx="3.5" fill="#141414" />
<rect x="569.00" y="60.00" width="34.00" height="34.00" rx="6" fill="#252525" stroke="#4ddba0" stroke-width="2"/>
<rect x="568.00" y="107.00" width="36.00" height="36.00" rx="6" fill="#222222" />
<text x="586.00" y="80.44" font-size="11" fill="#f0f0f0" font-weight="700" text-anchor="middle" textLength="5.38" lengthAdjust="spacingAndGlyphs" >3</text>
<text x="586.00" y="128.44" font-size="11" fill="#f0f0f0" font-weight="700" text-anchor="middle" textLength="5.38" lengthAdjust="spacingAndGlyphs" >4</text>
<rect x="620.00" y="59.00" width="72.00" height="84.00" rx="7" fill="#000000" />
<path d="M621.6 75.2L625.0 73.2L628.9 72.3L630.9 72.7L631.7 76.1L632.7 84.4L634.6 92.7L637.1 97.8L641.6 100.4L647.7 101.4L648.6 103.6L650.8 107.4L654.4 110.2L659.5 111.5L664.3 111.7L665.2 114.4L666.5 120.8L668.4 125.9L671.6 129.1L675.4 130.1L680.5 129.8L681.4 125.2L682.1 116.3L683.4 107.4L685.6 99.7L688.1 95.9L690.1 94.0" fill="none" stroke="#4ddba0" stroke-width="3" opacity="0.4" filter="url(#b1)" stroke-linejoin="round"/>
<path d="M621.6 75.2L625.0 73.2L628.9 72.3L630.9 72.7L631.7 76.1L632.7 84.4L634.6 92.7L637.1 97.8L641.6 100.4L647.7 101.4L648.6 103.6L650.8 107.4L654.4 110.2L659.5 111.5L664.3 111.7L665.2 114.4L666.5 120.8L668.4 125.9L671.6 129.1L675.4 130.1L680.5 129.8L681.4 125.2L682.1 116.3L683.4 107.4L685.6 99.7L688.1 95.9L690.1 94.0" fill="none" stroke="#41bd8d" stroke-width="0.85" stroke-linejoin="round"/>
<line x1="675.00" y1="127.80" x2="685.20" y2="127.80" stroke="#9a9a9a" stroke-width="1.8" />
<line x1="675.00" y1="130.90" x2="685.20" y2="130.90" stroke="#9a9a9a" stroke-width="1.8" />
<line x1="675.00" y1="134.00" x2="685.20" y2="134.00" stroke="#9a9a9a" stroke-width="1.8" />
<circle cx="197.00" cy="93.00" r="20.9" fill="url(#dkOuter)" />
<circle cx="197.00" cy="93.00" r="14.3" fill="url(#dkRing)" />
<circle cx="197.00" cy="93.00" r="11.1" fill="url(#dkRim)" />
<circle cx="197.00" cy="93.35" r="10.4" fill="url(#dkCap)" />
<circle cx="179.00" cy="111.50" r="0.9" fill="#1e1e1e" />
<circle cx="215.00" cy="111.50" r="0.9" fill="#1e1e1e" />
<path d="M185.47 104.53A16.3 16.3 0 0 1 203.89 78.23" fill="none" stroke="#4ddba0" stroke-width="1.5" stroke-linecap="butt"/>
<line x1="196.92" y1="93.18" x2="198.56" y2="89.65" stroke="#ffffff" stroke-width="2.1" stroke-linecap="round"/>
<circle cx="275.00" cy="93.00" r="20.9" fill="url(#dkOuter)" />
<circle cx="275.00" cy="93.00" r="14.3" fill="url(#dkRing)" />
<circle cx="275.00" cy="93.00" r="11.1" fill="url(#dkRim)" />
<circle cx="275.00" cy="93.35" r="10.4" fill="url(#dkCap)" />
<circle cx="257.00" cy="111.50" r="0.9" fill="#1e1e1e" />
<circle cx="293.00" cy="111.50" r="0.9" fill="#1e1e1e" />
<line x1="275.14" y1="92.86" x2="272.38" y2="95.62" stroke="#ffffff" stroke-width="2.1" stroke-linecap="round"/>
<circle cx="353.00" cy="93.00" r="20.9" fill="url(#dkOuter)" />
<circle cx="353.00" cy="93.00" r="14.3" fill="url(#dkRing)" />
<circle cx="353.00" cy="93.00" r="11.1" fill="url(#dkRim)" />
<circle cx="353.00" cy="93.35" r="10.4" fill="url(#dkCap)" />
<circle cx="335.00" cy="111.50" r="0.9" fill="#1e1e1e" />
<circle cx="371.00" cy="111.50" r="0.9" fill="#1e1e1e" />
<line x1="353.00" y1="93.20" x2="353.00" y2="89.30" stroke="#ffffff" stroke-width="2.1" stroke-linecap="round"/>
<circle cx="431.00" cy="93.00" r="20.9" fill="url(#dkOuter)" />
<circle cx="431.00" cy="93.00" r="14.3" fill="url(#dkRing)" />
<circle cx="431.00" cy="93.00" r="11.1" fill="url(#dkRim)" />
<circle cx="431.00" cy="93.35" r="10.4" fill="url(#dkCap)" />
<circle cx="413.00" cy="111.50" r="0.9" fill="#1e1e1e" />
<circle cx="449.00" cy="111.50" r="0.9" fill="#1e1e1e" />
<path d="M419.47 104.53A16.3 16.3 0 0 1 425.96 77.50" fill="none" stroke="#4ddba0" stroke-width="1.5" stroke-linecap="butt"/>
<line x1="431.06" y1="93.19" x2="429.86" y2="89.48" stroke="#ffffff" stroke-width="2.1" stroke-linecap="round"/>
<text x="197.00" y="131.25" font-size="10.2" fill="#8c8c8c" font-weight="700" text-anchor="middle" textLength="30.40" lengthAdjust="spacingAndGlyphs" >SHAPE</text>
<text x="275.00" y="131.25" font-size="10.2" fill="#8c8c8c" font-weight="700" text-anchor="middle" textLength="30.40" lengthAdjust="spacingAndGlyphs" >PHASE</text>
<text x="353.00" y="131.25" font-size="10.2" fill="#8c8c8c" font-weight="700" text-anchor="middle" textLength="34.80" lengthAdjust="spacingAndGlyphs" >OFFSET</text>
<text x="431.00" y="131.25" font-size="10.2" fill="#8c8c8c" font-weight="700" text-anchor="middle" textLength="23.36" lengthAdjust="spacingAndGlyphs" >RATE</text>
<circle cx="741.00" cy="93.00" r="20.9" fill="url(#dkOuter)" />
<circle cx="741.00" cy="93.00" r="14.3" fill="url(#dkRing)" />
<circle cx="741.00" cy="93.00" r="11.1" fill="url(#dkRim)" />
<circle cx="741.00" cy="93.35" r="10.4" fill="url(#dkCap)" />
<circle cx="723.00" cy="111.50" r="0.9" fill="#1e1e1e" />
<circle cx="759.00" cy="111.50" r="0.9" fill="#1e1e1e" />
<path d="M729.47 104.53A16.3 16.3 0 1 1 752.53 104.53" fill="none" stroke="#4ddba0" stroke-width="1.5" stroke-linecap="butt"/>
<line x1="740.86" y1="92.86" x2="743.62" y2="95.62" stroke="#ffffff" stroke-width="2.1" stroke-linecap="round"/>
<circle cx="819.00" cy="93.00" r="20.9" fill="url(#dkOuter)" />
<circle cx="819.00" cy="93.00" r="14.3" fill="url(#dkRing)" />
<circle cx="819.00" cy="93.00" r="11.1" fill="url(#dkRim)" />
<circle cx="819.00" cy="93.35" r="10.4" fill="url(#dkCap)" />
<circle cx="801.00" cy="111.50" r="0.9" fill="#1e1e1e" />
<circle cx="837.00" cy="111.50" r="0.9" fill="#1e1e1e" />
<line x1="819.14" y1="92.86" x2="816.38" y2="95.62" stroke="#ffffff" stroke-width="2.1" stroke-linecap="round"/>
<circle cx="897.00" cy="93.00" r="20.9" fill="url(#dkOuter)" />
<circle cx="897.00" cy="93.00" r="14.3" fill="url(#dkRing)" />
<circle cx="897.00" cy="93.00" r="11.1" fill="url(#dkRim)" />
<circle cx="897.00" cy="93.35" r="10.4" fill="url(#dkCap)" />
<circle cx="879.00" cy="111.50" r="0.9" fill="#1e1e1e" />
<circle cx="915.00" cy="111.50" r="0.9" fill="#1e1e1e" />
<line x1="897.00" y1="93.20" x2="897.00" y2="89.30" stroke="#ffffff" stroke-width="2.1" stroke-linecap="round"/>
<circle cx="975.00" cy="93.00" r="20.9" fill="url(#dkOuter)" />
<circle cx="975.00" cy="93.00" r="14.3" fill="url(#dkRing)" />
<circle cx="975.00" cy="93.00" r="11.1" fill="url(#dkRim)" />
<circle cx="975.00" cy="93.35" r="10.4" fill="url(#dkCap)" />
<circle cx="957.00" cy="111.50" r="0.9" fill="#1e1e1e" />
<circle cx="993.00" cy="111.50" r="0.9" fill="#1e1e1e" />
<path d="M963.47 104.53A16.3 16.3 0 0 1 979.77 77.41" fill="none" stroke="#4ddba0" stroke-width="1.5" stroke-linecap="butt"/>
<line x1="974.94" y1="93.19" x2="976.08" y2="89.46" stroke="#ffffff" stroke-width="2.1" stroke-linecap="round"/>
<text x="741.00" y="131.25" font-size="10.2" fill="#8c8c8c" font-weight="700" text-anchor="middle" textLength="30.40" lengthAdjust="spacingAndGlyphs" >SHAPE</text>
<text x="819.00" y="131.25" font-size="10.2" fill="#8c8c8c" font-weight="700" text-anchor="middle" textLength="30.40" lengthAdjust="spacingAndGlyphs" >PHASE</text>
<text x="897.00" y="131.25" font-size="10.2" fill="#8c8c8c" font-weight="700" text-anchor="middle" textLength="34.80" lengthAdjust="spacingAndGlyphs" >OFFSET</text>
<text x="975.20" y="131.25" font-size="10.2" fill="#8c8c8c" font-weight="700" text-anchor="middle" textLength="67.00" lengthAdjust="spacingAndGlyphs" >RATE SYNCHED</text>
<path d="M484 59.6H521.4a4 4 0 0 1 4 4V81" fill="none" stroke="url(#brk)" stroke-width="1.2"/>
<path d="M484 142.4H521.4a4 4 0 0 0 4 -4V121" fill="none" stroke="url(#brk)" stroke-width="1.2"/>
<rect x="479.00" y="88.40" width="34.00" height="23.60" rx="11.8" fill="#0f0f0f" />
<rect x="480.70" y="90.20" width="30.60" height="20.00" rx="10" fill="url(#tgFill)" />
<line x1="488.00" y1="100.20" x2="504.00" y2="100.20" stroke="#5a5a5a" stroke-width="1.6" />
<g transform="translate(524.8 101) rotate(-90)">
<text x="0.00" y="3.51" font-size="9.8" fill="#8a8a8a" font-weight="700" text-anchor="middle" textLength="22.87" lengthAdjust="spacingAndGlyphs" >SYNC</text>
</g>
<path d="M1028 59.6H1065.4a4 4 0 0 1 4 4V81" fill="none" stroke="url(#brk)" stroke-width="1.2"/>
<path d="M1028 142.4H1065.4a4 4 0 0 0 4 -4V121" fill="none" stroke="url(#brk)" stroke-width="1.2"/>
<rect x="1023.00" y="88.40" width="34.00" height="23.60" rx="11.8" fill="#0f0f0f" />
<rect x="1024.70" y="90.20" width="30.60" height="20.00" rx="10" fill="url(#tgFill)" />
<rect x="1029.50" y="97.70" width="21.00" height="5.00" rx="2.50" fill="#4ddba0" opacity="0.4" filter="url(#b2)"/>
<line x1="1032.00" y1="100.20" x2="1048.00" y2="100.20" stroke="#3fc08c" stroke-width="2" stroke-linecap="butt"/>
<g transform="translate(1068.8 101) rotate(-90)">
<text x="0.00" y="3.51" font-size="9.8" fill="#8a8a8a" font-weight="700" text-anchor="middle" textLength="22.87" lengthAdjust="spacingAndGlyphs" >SYNC</text>
</g>
<text x="92.50" y="210.10" font-size="12" fill="#c4c4c4" font-weight="400" text-anchor="start" textLength="23.00" lengthAdjust="spacingAndGlyphs" stroke="#c4c4c4" stroke-width="0.6">SIZE</text>
<text x="126.50" y="210.10" font-size="12" fill="#9a9a9a" font-weight="400" text-anchor="start" textLength="12.20" lengthAdjust="spacingAndGlyphs" stroke="#9a9a9a" stroke-width="0.6">4s</text>
<text x="185.80" y="210.10" font-size="12" fill="#c4c4c4" font-weight="400" text-anchor="start" textLength="46.00" lengthAdjust="spacingAndGlyphs" stroke="#c4c4c4" stroke-width="0.6">DIVISION</text>
<text x="242.50" y="210.10" font-size="12" fill="#9a9a9a" font-weight="400" text-anchor="start" textLength="20.50" lengthAdjust="spacingAndGlyphs" stroke="#9a9a9a" stroke-width="0.6">OFF</text>
<rect x="278.00" y="200.60" width="48.50" height="12.20" rx="3" fill="#8a8a8a" />
<text x="302.25" y="209.72" font-size="9.4" fill="#1a1a1a" font-weight="700" text-anchor="middle" textLength="23.51" lengthAdjust="spacingAndGlyphs" >SYNC</text>
<rect x="99.85" y="222.85" width="4.30" height="22.30" rx="2.15" fill="#2a8462" opacity="0.5" filter="url(#b1)"/>
<line x1="102.00" y1="225.00" x2="102.00" y2="243.00" stroke="#2a8462" stroke-width="1.8" />
<rect x="189.75" y="222.95" width="4.10" height="22.10" rx="2.05" fill="#1c5a44" opacity="0.3" filter="url(#b1)"/>
<line x1="191.80" y1="225.00" x2="191.80" y2="243.00" stroke="#1c5a44" stroke-width="1.6" />
<rect x="193.15" y="229.05" width="3.90" height="8.50" rx="1.95" fill="#1c5a44" opacity="0.2" filter="url(#b1)"/>
<line x1="195.10" y1="231.00" x2="195.10" y2="235.60" stroke="#1c5a44" stroke-width="1.4" />
<rect x="199.35" y="231.15" width="3.70" height="4.90" rx="1.85" fill="#1c5a44" opacity="0.2" filter="url(#b1)"/>
<line x1="201.20" y1="233.00" x2="201.20" y2="234.20" stroke="#1c5a44" stroke-width="1.2" />
<rect x="205.25" y="229.05" width="3.90" height="8.90" rx="1.95" fill="#1c5a44" opacity="0.2" filter="url(#b1)"/>
<line x1="207.20" y1="231.00" x2="207.20" y2="236.00" stroke="#1c5a44" stroke-width="1.4" />
<rect x="259.95" y="222.95" width="4.10" height="22.10" rx="2.05" fill="#1b5440" opacity="0.3" filter="url(#b1)"/>
<line x1="262.00" y1="225.00" x2="262.00" y2="243.00" stroke="#1b5440" stroke-width="1.6" />
<rect x="268.15" y="222.85" width="4.30" height="22.30" rx="2.15" fill="#22706e" opacity="0.4" filter="url(#b1)"/>
<line x1="270.30" y1="225.00" x2="270.30" y2="243.00" stroke="#22706e" stroke-width="1.8" />
<rect x="286.45" y="224.95" width="4.10" height="17.10" rx="2.05" fill="#1f6148" opacity="0.3" filter="url(#b1)"/>
<line x1="288.50" y1="227.00" x2="288.50" y2="240.00" stroke="#1f6148" stroke-width="1.6" />
<g stroke="#7c7c7c" stroke-width="1" fill="none" stroke-linecap="round">
<line x1="317.50" y1="233.80" x2="317.50" y2="227.20" stroke="#7c7c7c" stroke-width="1.0" />
<line x1="317.50" y1="229.60" x2="316.18" y2="227.72" stroke="#7c7c7c" stroke-width="0.9" />
<line x1="317.50" y1="229.60" x2="318.82" y2="227.72" stroke="#7c7c7c" stroke-width="0.9" />
<line x1="317.50" y1="233.80" x2="323.22" y2="230.50" stroke="#7c7c7c" stroke-width="1.0" />
<line x1="321.14" y1="231.70" x2="322.11" y2="229.62" stroke="#7c7c7c" stroke-width="0.9" />
<line x1="321.14" y1="231.70" x2="323.43" y2="231.90" stroke="#7c7c7c" stroke-width="0.9" />
<line x1="317.50" y1="233.80" x2="323.22" y2="237.10" stroke="#7c7c7c" stroke-width="1.0" />
<line x1="321.14" y1="235.90" x2="323.43" y2="235.70" stroke="#7c7c7c" stroke-width="0.9" />
<line x1="321.14" y1="235.90" x2="322.11" y2="237.98" stroke="#7c7c7c" stroke-width="0.9" />
<line x1="317.50" y1="233.80" x2="317.50" y2="240.40" stroke="#7c7c7c" stroke-width="1.0" />
<line x1="317.50" y1="238.00" x2="318.82" y2="239.88" stroke="#7c7c7c" stroke-width="0.9" />
<line x1="317.50" y1="238.00" x2="316.18" y2="239.88" stroke="#7c7c7c" stroke-width="0.9" />
<line x1="317.50" y1="233.80" x2="311.78" y2="237.10" stroke="#7c7c7c" stroke-width="1.0" />
<line x1="313.86" y1="235.90" x2="312.89" y2="237.98" stroke="#7c7c7c" stroke-width="0.9" />
<line x1="313.86" y1="235.90" x2="311.57" y2="235.70" stroke="#7c7c7c" stroke-width="0.9" />
<line x1="317.50" y1="233.80" x2="311.78" y2="230.50" stroke="#7c7c7c" stroke-width="1.0" />
<line x1="313.86" y1="231.70" x2="311.57" y2="231.90" stroke="#7c7c7c" stroke-width="0.9" />
<line x1="313.86" y1="231.70" x2="312.89" y2="229.62" stroke="#7c7c7c" stroke-width="0.9" />
</g>
<circle cx="113.00" cy="300.20" r="27.4" fill="url(#dkOuter)" />
<circle cx="113.00" cy="300.20" r="18" fill="url(#dkRing)" />
<circle cx="113.00" cy="300.20" r="13.799999999999999" fill="url(#dkRim)" />
<circle cx="113.00" cy="300.55" r="13.1" fill="url(#dkCap)" />
<circle cx="90.50" cy="323.30" r="0.9" fill="#1e1e1e" />
<circle cx="135.50" cy="323.30" r="0.9" fill="#1e1e1e" />
<path d="M97.44 315.76A22.0 22.0 0 0 1 113.00 278.20" fill="none" stroke="#4ddba0" stroke-width="1.75" stroke-linecap="butt"/>
<line x1="113.00" y1="299.90" x2="113.00" y2="290.60" stroke="#ffffff" stroke-width="2.4" stroke-linecap="round"/>
<circle cx="197.00" cy="300.20" r="27.4" fill="url(#dkOuter)" />
<circle cx="197.00" cy="300.20" r="18" fill="url(#dkRing)" />
<circle cx="197.00" cy="300.20" r="13.799999999999999" fill="url(#dkRim)" />
<circle cx="197.00" cy="300.55" r="13.1" fill="url(#dkCap)" />
<circle cx="174.50" cy="323.30" r="0.9" fill="#1e1e1e" />
<circle cx="219.50" cy="323.30" r="0.9" fill="#1e1e1e" />
<path d="M181.44 315.76A22.0 22.0 0 1 1 216.05 289.20" fill="none" stroke="#4ddba0" stroke-width="1.75" stroke-linecap="butt"/>
<line x1="197.26" y1="300.05" x2="205.31" y2="295.40" stroke="#ffffff" stroke-width="2.4" stroke-linecap="round"/>
<circle cx="281.20" cy="300.20" r="27.4" fill="url(#dkOuter)" />
<circle cx="281.20" cy="300.20" r="18" fill="url(#dkRing)" />
<circle cx="281.20" cy="300.20" r="13.799999999999999" fill="url(#dkRim)" />
<circle cx="281.20" cy="300.55" r="13.1" fill="url(#dkCap)" />
<circle cx="258.70" cy="323.30" r="0.9" fill="#1e1e1e" />
<circle cx="303.70" cy="323.30" r="0.9" fill="#1e1e1e" />
<path d="M265.64 315.76A22.0 22.0 0 1 1 296.76 315.76" fill="none" stroke="#4ddba0" stroke-width="1.75" stroke-linecap="butt"/>
<line x1="281.41" y1="300.41" x2="287.99" y2="306.99" stroke="#ffffff" stroke-width="2.4" stroke-linecap="round"/>
<text x="113.00" y="344.25" font-size="10.2" fill="#949494" font-weight="700" text-anchor="middle" textLength="39.70" lengthAdjust="spacingAndGlyphs" >RANDOM</text>
<text x="197.00" y="344.25" font-size="10.2" fill="#949494" font-weight="700" text-anchor="middle" textLength="39.70" lengthAdjust="spacingAndGlyphs" >RANDOM</text>
<text x="281.20" y="344.25" font-size="10.2" fill="#949494" font-weight="700" text-anchor="middle" textLength="34.31" lengthAdjust="spacingAndGlyphs" >GRAINS</text>
<line x1="112.10" y1="350.10" x2="112.10" y2="367.40" stroke="#303030" stroke-width="1.7" stroke-dasharray="2.7 2.05"/>
<line x1="196.10" y1="350.10" x2="196.10" y2="367.40" stroke="#303030" stroke-width="1.7" stroke-dasharray="2.7 2.05"/>
<circle cx="113.00" cy="400.30" r="27.4" fill="url(#dkOuter)" />
<circle cx="113.00" cy="400.30" r="18" fill="url(#dkRing)" />
<circle cx="113.00" cy="400.30" r="13.799999999999999" fill="url(#dkRim)" />
<circle cx="113.00" cy="400.65" r="13.1" fill="url(#dkCap)" />
<circle cx="90.50" cy="423.40" r="0.9" fill="#1e1e1e" />
<circle cx="135.50" cy="423.40" r="0.9" fill="#1e1e1e" />
<path d="M97.44 415.86A22.0 22.0 0 0 1 110.32 378.46" fill="none" stroke="#4ddba0" stroke-width="1.75" stroke-linecap="butt"/>
<line x1="112.96" y1="400.00" x2="111.83" y2="390.77" stroke="#ffffff" stroke-width="2.4" stroke-linecap="round"/>
<circle cx="197.00" cy="400.30" r="27.4" fill="url(#dkOuter)" />
<circle cx="197.00" cy="400.30" r="18" fill="url(#dkRing)" />
<circle cx="197.00" cy="400.30" r="13.799999999999999" fill="url(#dkRim)" />
<circle cx="197.00" cy="400.65" r="13.1" fill="url(#dkCap)" />
<circle cx="174.50" cy="423.40" r="0.9" fill="#1e1e1e" />
<circle cx="219.50" cy="423.40" r="0.9" fill="#1e1e1e" />
<line x1="196.79" y1="400.51" x2="190.21" y2="407.09" stroke="#ffffff" stroke-width="2.4" stroke-linecap="round"/>
<text x="113.00" y="444.45" font-size="10.2" fill="#949494" font-weight="700" text-anchor="middle" textLength="24.51" lengthAdjust="spacingAndGlyphs" >FREQ</text>
<text x="197.00" y="444.45" font-size="10.2" fill="#949494" font-weight="700" text-anchor="middle" textLength="34.80" lengthAdjust="spacingAndGlyphs" >OFFSET</text>
<line x1="112.10" y1="450.10" x2="112.10" y2="467.40" stroke="#303030" stroke-width="1.7" stroke-dasharray="2.7 2.05"/>
<line x1="196.10" y1="450.10" x2="196.10" y2="467.40" stroke="#303030" stroke-width="1.7" stroke-dasharray="2.7 2.05"/>
<rect x="95.00" y="472.20" width="34.00" height="23.60" rx="11.8" fill="#0f0f0f" />
<rect x="96.70" y="474.00" width="30.60" height="20.00" rx="10" fill="url(#tgFill)" />
<line x1="104.00" y1="484.00" x2="120.00" y2="484.00" stroke="#5a5a5a" stroke-width="1.6" />
<rect x="179.00" y="472.20" width="34.00" height="23.60" rx="11.8" fill="#0f0f0f" />
<rect x="180.70" y="474.00" width="30.60" height="20.00" rx="10" fill="url(#tgFill)" />
<line x1="188.00" y1="484.00" x2="204.00" y2="484.00" stroke="#5a5a5a" stroke-width="1.6" />
<path d="M803.7 250L805.5 218.8C806.6 226 808.8 236 812 241.5C816 247.5 822 249.2 834.5 249.6" fill="none" stroke="#4ddba0" stroke-width="3" opacity="0.3" filter="url(#b1)"/>
<path d="M803.7 250L805.5 218.8C806.6 226 808.8 236 812 241.5C816 247.5 822 249.2 834.5 249.6" fill="none" stroke="#3cb98a" stroke-width="1.1"/>
<circle cx="895.50" cy="232.50" r="11.6" fill="none" stroke="#4ddba0" stroke-width="4" opacity="0.3" filter="url(#b2)"/>
<circle cx="895.50" cy="232.50" r="11.6" fill="none" stroke="#4ddba0" stroke-width="1.5"/>
<circle cx="910.80" cy="232.50" r="11.6" fill="none" stroke="#4ddba0" stroke-width="4" opacity="0.3" filter="url(#b2)"/>
<circle cx="910.80" cy="232.50" r="11.6" fill="none" stroke="#4ddba0" stroke-width="1.5"/>
<text x="976.50" y="240.50" font-size="21.5" fill="#3aa77c" font-weight="400" text-anchor="middle" textLength="12.91" lengthAdjust="spacingAndGlyphs" stroke="#3aa77c" stroke-width="0.6">A</text>
<text x="998.40" y="240.50" font-size="21.5" fill="#3aa77c" font-weight="400" text-anchor="middle" textLength="11.19" lengthAdjust="spacingAndGlyphs" stroke="#3aa77c" stroke-width="0.6">B</text>
<circle cx="818.80" cy="300.40" r="27.4" fill="url(#dkOuter)" />
<circle cx="818.80" cy="300.40" r="18" fill="url(#dkRing)" />
<circle cx="818.80" cy="300.40" r="13.799999999999999" fill="url(#dkRim)" />
<circle cx="818.80" cy="300.75" r="13.1" fill="url(#dkCap)" />
<circle cx="796.30" cy="323.50" r="0.9" fill="#1e1e1e" />
<circle cx="841.30" cy="323.50" r="0.9" fill="#1e1e1e" />
<line x1="818.59" y1="300.61" x2="812.01" y2="307.19" stroke="#ffffff" stroke-width="2.4" stroke-linecap="round"/>
<path d="M801.62 317.58A24.3 24.3 0 0 1 816.26 276.23" fill="none" stroke="#f4f4f4" stroke-width="1.5" />
<circle cx="903.20" cy="300.40" r="27.4" fill="url(#dkOuter)" />
<circle cx="903.20" cy="300.40" r="18" fill="url(#dkRing)" />
<circle cx="903.20" cy="300.40" r="13.799999999999999" fill="url(#dkRim)" />
<circle cx="903.20" cy="300.75" r="13.1" fill="url(#dkCap)" />
<circle cx="880.70" cy="323.50" r="0.9" fill="#1e1e1e" />
<circle cx="925.70" cy="323.50" r="0.9" fill="#1e1e1e" />
<path d="M887.64 315.96A22.0 22.0 0 1 1 918.76 315.96" fill="none" stroke="#4ddba0" stroke-width="1.75" stroke-linecap="butt"/>
<line x1="903.43" y1="300.60" x2="910.45" y2="306.70" stroke="#ffffff" stroke-width="2.4" stroke-linecap="round"/>
<circle cx="987.50" cy="300.40" r="27.4" fill="url(#dkOuter)" />
<circle cx="987.50" cy="300.40" r="18" fill="url(#dkRing)" />
<circle cx="987.50" cy="300.40" r="13.799999999999999" fill="url(#dkRim)" />
<circle cx="987.50" cy="300.75" r="13.1" fill="url(#dkCap)" />
<circle cx="965.00" cy="323.50" r="0.9" fill="#1e1e1e" />
<circle cx="1010.00" cy="323.50" r="0.9" fill="#1e1e1e" />
<line x1="987.50" y1="300.10" x2="987.50" y2="290.80" stroke="#ffffff" stroke-width="2.4" stroke-linecap="round"/>
<text x="819.00" y="344.45" font-size="10.2" fill="#949494" font-weight="700" text-anchor="middle" textLength="38.00" lengthAdjust="spacingAndGlyphs" >WINDOW</text>
<text x="903.20" y="344.45" font-size="10.2" fill="#949494" font-weight="700" text-anchor="middle" textLength="35.00" lengthAdjust="spacingAndGlyphs" >STEREO</text>
<text x="987.50" y="344.45" font-size="10.2" fill="#949494" font-weight="700" text-anchor="middle" textLength="30.00" lengthAdjust="spacingAndGlyphs" >ROUTE</text>
<circle cx="818.80" cy="400.30" r="27.4" fill="url(#dkOuter)" />
<circle cx="818.80" cy="400.30" r="18" fill="url(#dkRing)" />
<circle cx="818.80" cy="400.30" r="13.799999999999999" fill="url(#dkRim)" />
<circle cx="818.80" cy="400.65" r="13.1" fill="url(#dkCap)" />
<circle cx="796.30" cy="423.40" r="0.9" fill="#1e1e1e" />
<circle cx="841.30" cy="423.40" r="0.9" fill="#1e1e1e" />
<path d="M803.24 415.86A22.0 22.0 0 0 1 818.80 378.30" fill="none" stroke="#4ddba0" stroke-width="1.75" stroke-linecap="butt"/>
<line x1="818.59" y1="400.51" x2="812.01" y2="407.09" stroke="#ffffff" stroke-width="2.4" stroke-linecap="round"/>
<path d="M801.48 417.62A24.5 24.5 0 0 1 797.37 412.18" fill="none" stroke="#f4f4f4" stroke-width="1.5" />
<circle cx="903.20" cy="400.30" r="27.4" fill="url(#dkOuter)" />
<circle cx="903.20" cy="400.30" r="18" fill="url(#dkRing)" />
<circle cx="903.20" cy="400.30" r="13.799999999999999" fill="url(#dkRim)" />
<circle cx="903.20" cy="400.65" r="13.1" fill="url(#dkCap)" />
<circle cx="880.70" cy="423.40" r="0.9" fill="#1e1e1e" />
<circle cx="925.70" cy="423.40" r="0.9" fill="#1e1e1e" />
<path d="M887.64 415.86A22.0 22.0 0 0 1 911.44 379.90" fill="none" stroke="#4ddba0" stroke-width="1.75" stroke-linecap="butt"/>
<line x1="903.31" y1="400.02" x2="906.80" y2="391.40" stroke="#ffffff" stroke-width="2.4" stroke-linecap="round"/>
<circle cx="987.50" cy="400.30" r="27.4" fill="url(#dkOuter)" />
<circle cx="987.50" cy="400.30" r="18" fill="url(#dkRing)" />
<circle cx="987.50" cy="400.30" r="13.799999999999999" fill="url(#dkRim)" />
<circle cx="987.50" cy="400.65" r="13.1" fill="url(#dkCap)" />
<circle cx="965.00" cy="423.40" r="0.9" fill="#1e1e1e" />
<circle cx="1010.00" cy="423.40" r="0.9" fill="#1e1e1e" />
<path d="M971.94 415.86A22.0 22.0 0 0 1 987.50 378.30" fill="none" stroke="#4ddba0" stroke-width="1.75" stroke-linecap="butt"/>
<line x1="987.50" y1="400.00" x2="987.50" y2="390.70" stroke="#ffffff" stroke-width="2.4" stroke-linecap="round"/>
<text x="819.20" y="444.25" font-size="10.2" fill="#949494" font-weight="700" text-anchor="middle" textLength="30.00" lengthAdjust="spacingAndGlyphs" >SHAPE</text>
<text x="903.40" y="444.25" font-size="10.2" fill="#949494" font-weight="700" text-anchor="middle" textLength="63.20" lengthAdjust="spacingAndGlyphs" >SIZE SYNCHED</text>
<text x="987.80" y="444.25" font-size="10.2" fill="#949494" font-weight="700" text-anchor="middle" textLength="45.50" lengthAdjust="spacingAndGlyphs" >REV. PROB</text>
<line x1="902.30" y1="450.10" x2="902.30" y2="467.40" stroke="#303030" stroke-width="1.7" stroke-dasharray="2.7 2.05"/>
<rect x="885.20" y="472.20" width="34.00" height="23.60" rx="11.8" fill="#0f0f0f" />
<rect x="886.90" y="474.00" width="30.60" height="20.00" rx="10" fill="url(#tgFill)" />
<rect x="891.70" y="481.50" width="21.00" height="5.00" rx="2.50" fill="#4ddba0" opacity="0.4" filter="url(#b2)"/>
<line x1="894.20" y1="484.00" x2="910.20" y2="484.00" stroke="#3fc08c" stroke-width="2" stroke-linecap="butt"/>
<g clip-path="url(#clipMaj)">
<text x="478.80" y="209.60" font-size="12" fill="#b4b4b4" font-weight="400" text-anchor="end" textLength="23.50" lengthAdjust="spacingAndGlyphs" stroke="#b4b4b4" stroke-width="0.6">MAJ</text>
</g>
<text x="506.00" y="209.60" font-size="12" fill="#8a8a8a" font-weight="400" text-anchor="start" textLength="40.00" lengthAdjust="spacingAndGlyphs" stroke="#8a8a8a" stroke-width="0.6">MAJ 2M</text>
<text x="563.80" y="208.68" font-size="8.6" fill="#585858" font-weight="700" text-anchor="start" textLength="44.20" lengthAdjust="spacingAndGlyphs" >MAJ 5 DIM</text>
<line x1="633.60" y1="202.00" x2="633.60" y2="208.50" stroke="#1a2030" stroke-width="1" />
<path d="M462.09 273.02A120.2 120.2 0 0 1 637.91 273.02" fill="none" stroke="#909090" stroke-width="1.7" stroke-dasharray="2.2 2.6"/>
<path d="M662.95 313.89A120.2 120.2 0 0 1 571.90 473.19" fill="none" stroke="#909090" stroke-width="1.7" stroke-dasharray="2.2 2.6"/>
<path d="M528.10 473.19A120.2 120.2 0 0 1 437.05 313.89" fill="none" stroke="#909090" stroke-width="1.7" stroke-dasharray="2.2 2.6"/>
<circle cx="550.00" cy="355.00" r="90" fill="none" stroke="#ffffff" stroke-width="1.8"/>
<path d="M472.06 310.00L627.94 310.00L550.00 445.00Z" fill="none" stroke="#ffffff" stroke-width="1.8" stroke-linejoin="miter"/>
<line x1="550.40" y1="356.00" x2="472.06" y2="310.00" stroke="#e0e0e0" stroke-width="0.95" stroke-dasharray="4.5 2"/>
<line x1="550.40" y1="356.00" x2="627.94" y2="310.00" stroke="#e0e0e0" stroke-width="0.95" stroke-dasharray="4.5 2"/>
<line x1="550.40" y1="356.00" x2="550.00" y2="445.00" stroke="#e0e0e0" stroke-width="0.95" stroke-dasharray="4.5 2"/>
<circle cx="550.40" cy="356.00" r="12" fill="#a9a9a9" />
<circle cx="550.40" cy="356.00" r="6.5" fill="#c2c2c2" />
<line x1="550.40" y1="356.00" x2="542.61" y2="351.50" stroke="#d6d6d6" stroke-width="1" />
<line x1="550.40" y1="356.00" x2="558.19" y2="351.50" stroke="#d6d6d6" stroke-width="1" />
<line x1="550.40" y1="356.00" x2="550.40" y2="365.00" stroke="#d6d6d6" stroke-width="1" />
<path d="M434.65 306.40A16.05 16.05 0 1 1 457.35 306.40" fill="none" stroke="#3a3a3a" stroke-width="1.6" />
<path d="M446.00 279.00A16.05 16.05 0 0 1 461.81 292.26" fill="none" stroke="#4ddba0" stroke-width="1.9" />
<path d="M452.24 294.37L443.64 301.09L442.12 290.29Z" fill="#ffffff" stroke="#ffffff" stroke-width="0.5" stroke-linejoin="round"/>
<path d="M642.65 306.25A16.05 16.05 0 1 1 665.35 306.25" fill="none" stroke="#3a3a3a" stroke-width="1.6" />
<path d="M654.00 278.85A16.05 16.05 0 0 1 665.35 306.25" fill="none" stroke="#4ddba0" stroke-width="1.9" />
<path d="M658.45 299.55L647.91 296.73L655.63 289.01Z" fill="#ffffff" stroke="#ffffff" stroke-width="0.5" stroke-linejoin="round"/>
<path d="M538.65 492.65A16.05 16.05 0 1 1 561.35 492.65" fill="none" stroke="#3a3a3a" stroke-width="1.6" />
<path d="M550.00 475.20L555.46 484.65L544.54 484.65Z" fill="#ffffff" stroke="#ffffff" stroke-width="0.5" stroke-linejoin="round"/>
<text x="387.70" y="298.42" font-size="11.8" fill="#a4a4a4" font-weight="400" text-anchor="start" textLength="22.20" lengthAdjust="spacingAndGlyphs" stroke="#a4a4a4" stroke-width="0.6">7 ST</text>
<text x="691.00" y="298.42" font-size="11.8" fill="#a4a4a4" font-weight="400" text-anchor="start" textLength="28.70" lengthAdjust="spacingAndGlyphs" stroke="#a4a4a4" stroke-width="0.6">12 ST</text>
<text x="538.50" y="514.52" font-size="11.8" fill="#969696" font-weight="400" text-anchor="start" textLength="22.20" lengthAdjust="spacingAndGlyphs" stroke="#969696" stroke-width="0.6">0 ST</text>
<rect x="427.30" y="504.60" width="61.70" height="18.00" rx="3.5" fill="#2f2f2f" />
<text x="458.15" y="516.76" font-size="9.8" fill="#f4f4f4" font-weight="700" text-anchor="middle" textLength="48.02" lengthAdjust="spacingAndGlyphs" >QUANTIZED</text>
<rect x="610.30" y="504.60" width="62.00" height="18.00" rx="3.5" fill="#333333" />
<text x="641.30" y="516.76" font-size="9.8" fill="#f4f4f4" font-weight="700" text-anchor="middle" textLength="24.82" lengthAdjust="spacingAndGlyphs" >FIXED</text>
<rect x="12.00" y="519.30" width="23.80" height="23.50" rx="3.5" fill="#b2b2b2" />
<text x="23.90" y="535.25" font-size="12" fill="#1e1e1e" font-weight="700" text-anchor="middle" textLength="6.93" lengthAdjust="spacingAndGlyphs" >A</text>
<rect x="1064.20" y="519.30" width="23.80" height="23.50" rx="3.5" fill="#b2b2b2" />
<text x="1076.10" y="535.25" font-size="12" fill="#1e1e1e" font-weight="700" text-anchor="middle" textLength="6.93" lengthAdjust="spacingAndGlyphs" >B</text>
<rect x="12.40" y="567.00" width="205.30" height="239.80" rx="4" fill="#e0e0e0" />
<rect x="230.00" y="567.00" width="205.30" height="239.80" rx="4" fill="#e0e0e0" />
<rect x="447.30" y="567.00" width="205.30" height="239.80" rx="4" fill="#e0e0e0" />
<rect x="665.00" y="567.00" width="205.30" height="239.80" rx="4" fill="#e0e0e0" />
<rect x="882.40" y="567.00" width="205.30" height="239.80" rx="4" fill="#e0e0e0" />
<rect x="24.00" y="582.20" width="29.70" height="17.50" rx="3.5" fill="#2a2a2a" />
<text x="38.85" y="594.25" font-size="10.2" fill="#ffffff" font-weight="700" text-anchor="middle" textLength="15.90" lengthAdjust="spacingAndGlyphs" >FX1</text>
<rect x="186.70" y="587.10" width="18.20" height="16.20" rx="8.1" fill="#000" opacity="0.42" filter="url(#b3)"/>
<rect x="183.40" y="582.80" width="19.80" height="17.80" rx="8.9" fill="#f6f6f6" filter="url(#s1)"/>
<rect x="184.20" y="583.60" width="19.40" height="17.40" rx="8.7" fill="#8a8a8a" opacity="0.6" filter="url(#s1)"/>
<rect x="184.50" y="583.90" width="18.20" height="16.20" rx="7.8" fill="#27292a" />
<rect x="187.80" y="589.50" width="11.60" height="5.00" rx="2.50" fill="#35c08c" opacity="0.38" filter="url(#b2)"/>
<line x1="190.30" y1="592.00" x2="196.90" y2="592.00" stroke="#3dbd8b" stroke-width="1.7" stroke-linecap="butt"/>
<line x1="189.90" y1="592.00" x2="197.30" y2="592.00" stroke="#3dbd8b" stroke-width="1.1" stroke-linecap="round"/>
<circle cx="52.70" cy="639.65" r="20.8" fill="#000" opacity="0.16" filter="url(#b2)"/>
<circle cx="52.70" cy="638.25" r="20.9" fill="#f0f0f0" />
<circle cx="52.70" cy="638.25" r="19.9" fill="#2a2a2a" />
<path d="M41.60 649.35A15.7 15.7 0 0 1 40.16 628.80" fill="none" stroke="#3fd69b" stroke-width="1.3" />
<circle cx="53.20" cy="639.45" r="14.3" fill="#000" opacity="0.3" filter="url(#b1)"/>
<circle cx="52.70" cy="638.25" r="14.4" fill="url(#ltCap)" />
<circle cx="53.20" cy="639.55" r="10.8" fill="#000" opacity="0.16" filter="url(#b1)"/>
<circle cx="52.50" cy="637.75" r="10.7" fill="url(#ltCapIn)" />
<line x1="53.02" y1="638.49" x2="43.52" y2="631.33" stroke="#0c0c0c" stroke-width="2.1" stroke-linecap="round"/>
<circle cx="35.40" cy="655.75" r="0.75" fill="#1a1a1a" />
<circle cx="70.00" cy="655.75" r="0.75" fill="#1a1a1a" />
<text x="52.70" y="671.05" font-size="10.2" fill="#161616" font-weight="700" text-anchor="middle" textLength="22.66" lengthAdjust="spacingAndGlyphs" >RATE</text>
<circle cx="114.80" cy="639.65" r="20.8" fill="#000" opacity="0.16" filter="url(#b2)"/>
<circle cx="114.80" cy="638.25" r="20.9" fill="#f0f0f0" />
<circle cx="114.80" cy="638.25" r="19.9" fill="#2a2a2a" />
<path d="M103.70 649.35A15.7 15.7 0 0 1 99.25 636.06" fill="none" stroke="#3fd69b" stroke-width="1.3" />
<circle cx="115.30" cy="639.45" r="14.3" fill="#000" opacity="0.3" filter="url(#b1)"/>
<circle cx="114.80" cy="638.25" r="14.4" fill="url(#ltCap)" />
<circle cx="115.30" cy="639.55" r="10.8" fill="#000" opacity="0.16" filter="url(#b1)"/>
<circle cx="114.60" cy="637.75" r="10.7" fill="url(#ltCapIn)" />
<line x1="115.20" y1="638.31" x2="103.41" y2="636.65" stroke="#0c0c0c" stroke-width="2.1" stroke-linecap="round"/>
<circle cx="97.50" cy="655.75" r="0.75" fill="#1a1a1a" />
<circle cx="132.10" cy="655.75" r="0.75" fill="#1a1a1a" />
<text x="114.80" y="671.05" font-size="10.2" fill="#161616" font-weight="700" text-anchor="middle" textLength="20.44" lengthAdjust="spacingAndGlyphs" >TIME</text>
<circle cx="177.40" cy="639.65" r="20.8" fill="#000" opacity="0.16" filter="url(#b2)"/>
<circle cx="177.40" cy="638.25" r="20.9" fill="#f0f0f0" />
<circle cx="177.40" cy="638.25" r="19.9" fill="#2a2a2a" />
<path d="M166.30 649.35A15.7 15.7 0 0 1 183.28 623.69" fill="none" stroke="#3fd69b" stroke-width="1.3" />
<circle cx="177.90" cy="639.45" r="14.3" fill="#000" opacity="0.3" filter="url(#b1)"/>
<circle cx="177.40" cy="638.25" r="14.4" fill="url(#ltCap)" />
<circle cx="177.90" cy="639.55" r="10.8" fill="#000" opacity="0.16" filter="url(#b1)"/>
<circle cx="177.20" cy="637.75" r="10.7" fill="url(#ltCapIn)" />
<line x1="177.25" y1="638.62" x2="181.71" y2="627.59" stroke="#0c0c0c" stroke-width="2.1" stroke-linecap="round"/>
<circle cx="160.10" cy="655.75" r="0.75" fill="#1a1a1a" />
<circle cx="194.70" cy="655.75" r="0.75" fill="#1a1a1a" />
<text x="177.40" y="671.05" font-size="10.2" fill="#161616" font-weight="700" text-anchor="middle" textLength="29.00" lengthAdjust="spacingAndGlyphs" >DEPTH</text>
<circle cx="52.70" cy="712.05" r="20.8" fill="#000" opacity="0.16" filter="url(#b2)"/>
<circle cx="52.70" cy="710.65" r="20.9" fill="#f0f0f0" />
<circle cx="52.70" cy="710.65" r="19.9" fill="#2a2a2a" />
<circle cx="53.20" cy="711.85" r="14.3" fill="#000" opacity="0.3" filter="url(#b1)"/>
<circle cx="52.70" cy="710.65" r="14.4" fill="url(#ltCap)" />
<circle cx="53.20" cy="711.95" r="10.8" fill="#000" opacity="0.16" filter="url(#b1)"/>
<circle cx="52.50" cy="710.15" r="10.7" fill="url(#ltCapIn)" />
<line x1="52.98" y1="710.37" x2="44.57" y2="718.78" stroke="#0c0c0c" stroke-width="2.1" stroke-linecap="round"/>
<circle cx="35.40" cy="728.15" r="0.75" fill="#1a1a1a" />
<circle cx="70.00" cy="728.15" r="0.75" fill="#1a1a1a" />
<text x="52.70" y="743.05" font-size="10.2" fill="#161616" font-weight="700" text-anchor="middle" textLength="46.80" lengthAdjust="spacingAndGlyphs" >FEEDBACK</text>
<circle cx="114.80" cy="712.05" r="20.8" fill="#000" opacity="0.16" filter="url(#b2)"/>
<circle cx="114.80" cy="710.65" r="20.9" fill="#f0f0f0" />
<circle cx="114.80" cy="710.65" r="19.9" fill="#2a2a2a" />
<circle cx="115.30" cy="711.85" r="14.3" fill="#000" opacity="0.3" filter="url(#b1)"/>
<circle cx="114.80" cy="710.65" r="14.4" fill="url(#ltCap)" />
<circle cx="115.30" cy="711.95" r="10.8" fill="#000" opacity="0.16" filter="url(#b1)"/>
<circle cx="114.60" cy="710.15" r="10.7" fill="url(#ltCapIn)" />
<line x1="115.08" y1="710.37" x2="106.67" y2="718.78" stroke="#0c0c0c" stroke-width="2.1" stroke-linecap="round"/>
<circle cx="97.50" cy="728.15" r="0.75" fill="#1a1a1a" />
<circle cx="132.10" cy="728.15" r="0.75" fill="#1a1a1a" />
<text x="114.80" y="743.05" font-size="10.2" fill="#161616" font-weight="700" text-anchor="middle" textLength="25.67" lengthAdjust="spacingAndGlyphs" >MODE</text>
<circle cx="177.40" cy="712.05" r="20.8" fill="#000" opacity="0.16" filter="url(#b2)"/>
<circle cx="177.40" cy="710.65" r="20.9" fill="#f0f0f0" />
<circle cx="177.40" cy="710.65" r="19.9" fill="#2a2a2a" />
<path d="M166.30 721.75A15.7 15.7 0 0 1 179.77 695.13" fill="none" stroke="#3fd69b" stroke-width="1.3" />
<circle cx="177.90" cy="711.85" r="14.3" fill="#000" opacity="0.3" filter="url(#b1)"/>
<circle cx="177.40" cy="710.65" r="14.4" fill="url(#ltCap)" />
<circle cx="177.90" cy="711.95" r="10.8" fill="#000" opacity="0.16" filter="url(#b1)"/>
<circle cx="177.20" cy="710.15" r="10.7" fill="url(#ltCapIn)" />
<line x1="177.34" y1="711.05" x2="179.14" y2="699.28" stroke="#0c0c0c" stroke-width="2.1" stroke-linecap="round"/>
<circle cx="160.10" cy="728.15" r="0.75" fill="#1a1a1a" />
<circle cx="194.70" cy="728.15" r="0.75" fill="#1a1a1a" />
<text x="177.40" y="743.05" font-size="10.2" fill="#161616" font-weight="700" text-anchor="middle" textLength="40.60" lengthAdjust="spacingAndGlyphs" >DRY/WET</text>
<rect x="242.00" y="582.20" width="30.00" height="17.50" rx="3.5" fill="#2a2a2a" />
<text x="257.00" y="594.25" font-size="10.2" fill="#ffffff" font-weight="700" text-anchor="middle" textLength="15.90" lengthAdjust="spacingAndGlyphs" >FX2</text>
<rect x="403.90" y="587.10" width="18.20" height="16.20" rx="8.1" fill="#000" opacity="0.42" filter="url(#b3)"/>
<rect x="400.60" y="582.80" width="19.80" height="17.80" rx="8.9" fill="#f6f6f6" filter="url(#s1)"/>
<rect x="401.40" y="583.60" width="19.40" height="17.40" rx="8.7" fill="#8a8a8a" opacity="0.6" filter="url(#s1)"/>
<rect x="401.70" y="583.90" width="18.20" height="16.20" rx="7.8" fill="#27292a" />
<rect x="405.00" y="589.50" width="11.60" height="5.00" rx="2.50" fill="#35c08c" opacity="0.38" filter="url(#b2)"/>
<line x1="407.50" y1="592.00" x2="414.10" y2="592.00" stroke="#3dbd8b" stroke-width="1.7" stroke-linecap="butt"/>
<line x1="407.10" y1="592.00" x2="414.50" y2="592.00" stroke="#3dbd8b" stroke-width="1.1" stroke-linecap="round"/>
<circle cx="270.30" cy="639.65" r="20.8" fill="#000" opacity="0.16" filter="url(#b2)"/>
<circle cx="270.30" cy="638.25" r="20.9" fill="#f0f0f0" />
<circle cx="270.30" cy="638.25" r="19.9" fill="#2a2a2a" />
<path d="M259.20 649.35A15.7 15.7 0 0 1 258.27 628.16" fill="none" stroke="#3fd69b" stroke-width="1.3" />
<circle cx="270.80" cy="639.45" r="14.3" fill="#000" opacity="0.3" filter="url(#b1)"/>
<circle cx="270.30" cy="638.25" r="14.4" fill="url(#ltCap)" />
<circle cx="270.80" cy="639.55" r="10.8" fill="#000" opacity="0.16" filter="url(#b1)"/>
<circle cx="270.10" cy="637.75" r="10.7" fill="url(#ltCapIn)" />
<line x1="270.61" y1="638.51" x2="261.49" y2="630.86" stroke="#0c0c0c" stroke-width="2.1" stroke-linecap="round"/>
<circle cx="253.00" cy="655.75" r="0.75" fill="#1a1a1a" />
<circle cx="287.60" cy="655.75" r="0.75" fill="#1a1a1a" />
<text x="270.30" y="671.05" font-size="10.2" fill="#161616" font-weight="700" text-anchor="middle" textLength="34.80" lengthAdjust="spacingAndGlyphs" >CUTOFF</text>
<circle cx="332.40" cy="639.65" r="20.8" fill="#000" opacity="0.16" filter="url(#b2)"/>
<circle cx="332.40" cy="638.25" r="20.9" fill="#f0f0f0" />
<circle cx="332.40" cy="638.25" r="19.9" fill="#2a2a2a" />
<path d="M321.30 649.35A15.7 15.7 0 0 1 318.17 644.89" fill="none" stroke="#3fd69b" stroke-width="1.3" />
<circle cx="332.90" cy="639.45" r="14.3" fill="#000" opacity="0.3" filter="url(#b1)"/>
<circle cx="332.40" cy="638.25" r="14.4" fill="url(#ltCap)" />
<circle cx="332.90" cy="639.55" r="10.8" fill="#000" opacity="0.16" filter="url(#b1)"/>
<circle cx="332.20" cy="637.75" r="10.7" fill="url(#ltCapIn)" />
<line x1="332.76" y1="638.08" x2="321.98" y2="643.11" stroke="#0c0c0c" stroke-width="2.1" stroke-linecap="round"/>
<circle cx="315.10" cy="655.75" r="0.75" fill="#1a1a1a" />
<circle cx="349.70" cy="655.75" r="0.75" fill="#1a1a1a" />
<text x="332.40" y="671.05" font-size="10.2" fill="#161616" font-weight="700" text-anchor="middle" textLength="54.40" lengthAdjust="spacingAndGlyphs" >RESONANCE</text>
<circle cx="395.00" cy="639.65" r="20.8" fill="#000" opacity="0.16" filter="url(#b2)"/>
<circle cx="395.00" cy="638.25" r="20.9" fill="#f0f0f0" />
<circle cx="395.00" cy="638.25" r="19.9" fill="#2a2a2a" />
<path d="M383.90 649.35A15.7 15.7 0 0 1 395.00 622.55" fill="none" stroke="#3fd69b" stroke-width="1.3" />
<circle cx="395.50" cy="639.45" r="14.3" fill="#000" opacity="0.3" filter="url(#b1)"/>
<circle cx="395.00" cy="638.25" r="14.4" fill="url(#ltCap)" />
<circle cx="395.50" cy="639.55" r="10.8" fill="#000" opacity="0.16" filter="url(#b1)"/>
<circle cx="394.80" cy="637.75" r="10.7" fill="url(#ltCapIn)" />
<line x1="395.00" y1="638.65" x2="395.00" y2="626.75" stroke="#0c0c0c" stroke-width="2.1" stroke-linecap="round"/>
<circle cx="377.70" cy="655.75" r="0.75" fill="#1a1a1a" />
<circle cx="412.30" cy="655.75" r="0.75" fill="#1a1a1a" />
<text x="395.00" y="671.05" font-size="10.2" fill="#161616" font-weight="700" text-anchor="middle" textLength="25.67" lengthAdjust="spacingAndGlyphs" >MODE</text>
<rect x="37.50" y="768.20" width="158.00" height="23.60" rx="11.8" fill="#000" opacity="0.5" filter="url(#b3)"/>
<rect x="35.10" y="763.90" width="158.60" height="24.00" rx="12" fill="#f8f8f8" filter="url(#s1)"/>
<rect x="36.00" y="764.70" width="158.30" height="23.80" rx="11.9" fill="#282828" />
<text x="50.20" y="780.42" font-size="11.8" fill="#ffffff" font-weight="700" text-anchor="start" textLength="44.00" lengthAdjust="spacingAndGlyphs" >CHORUS</text>
<line x1="169.80" y1="773.50" x2="180.60" y2="773.50" stroke="#e4e4e4" stroke-width="1.9" />
<line x1="169.80" y1="776.55" x2="180.60" y2="776.55" stroke="#e4e4e4" stroke-width="1.9" />
<line x1="169.80" y1="779.60" x2="180.60" y2="779.60" stroke="#e4e4e4" stroke-width="1.9" />
<rect x="255.20" y="768.20" width="158.00" height="23.60" rx="11.8" fill="#000" opacity="0.5" filter="url(#b3)"/>
<rect x="252.80" y="763.90" width="158.60" height="24.00" rx="12" fill="#f8f8f8" filter="url(#s1)"/>
<rect x="253.70" y="764.70" width="158.30" height="23.80" rx="11.9" fill="#282828" />
<text x="267.90" y="780.42" font-size="11.8" fill="#ffffff" font-weight="700" text-anchor="start" textLength="36.00" lengthAdjust="spacingAndGlyphs" >FILTER</text>
<line x1="387.50" y1="773.50" x2="398.30" y2="773.50" stroke="#e4e4e4" stroke-width="1.9" />
<line x1="387.50" y1="776.55" x2="398.30" y2="776.55" stroke="#e4e4e4" stroke-width="1.9" />
<line x1="387.50" y1="779.60" x2="398.30" y2="779.60" stroke="#e4e4e4" stroke-width="1.9" />
<rect x="459.40" y="609.00" width="56.60" height="143.60" rx="4" fill="#b9b9b9" />
<rect x="459.00" y="582.20" width="44.60" height="17.60" rx="3.5" fill="#2a2a2a" />
<text x="481.30" y="594.30" font-size="10.2" fill="#ffffff" font-weight="700" text-anchor="middle" textLength="31.32" lengthAdjust="spacingAndGlyphs" >SEND 1</text>
<rect x="509.00" y="582.20" width="40.60" height="17.60" rx="3.5" fill="#6b6b6b" />
<text x="529.30" y="594.30" font-size="10.2" fill="#f0f0f0" font-weight="700" text-anchor="middle" textLength="28.59" lengthAdjust="spacingAndGlyphs" >DELAY</text>
<rect x="621.80" y="587.10" width="18.20" height="16.20" rx="8.1" fill="#000" opacity="0.42" filter="url(#b3)"/>
<rect x="618.50" y="582.80" width="19.80" height="17.80" rx="8.9" fill="#f6f6f6" filter="url(#s1)"/>
<rect x="619.30" y="583.60" width="19.40" height="17.40" rx="8.7" fill="#8a8a8a" opacity="0.6" filter="url(#s1)"/>
<rect x="619.60" y="583.90" width="18.20" height="16.20" rx="7.8" fill="#27292a" />
<rect x="622.90" y="589.50" width="11.60" height="5.00" rx="2.50" fill="#35c08c" opacity="0.38" filter="url(#b2)"/>
<line x1="625.40" y1="592.00" x2="632.00" y2="592.00" stroke="#3dbd8b" stroke-width="1.7" stroke-linecap="butt"/>
<line x1="625.00" y1="592.00" x2="632.40" y2="592.00" stroke="#3dbd8b" stroke-width="1.1" stroke-linecap="round"/>
<circle cx="487.60" cy="639.65" r="20.8" fill="#000" opacity="0.16" filter="url(#b2)"/>
<circle cx="487.60" cy="638.25" r="20.9" fill="#f0f0f0" />
<circle cx="487.60" cy="638.25" r="19.9" fill="#2a2a2a" />
<circle cx="488.10" cy="639.45" r="14.3" fill="#000" opacity="0.3" filter="url(#b1)"/>
<circle cx="487.60" cy="638.25" r="14.4" fill="url(#ltCap)" />
<circle cx="488.10" cy="639.55" r="10.8" fill="#000" opacity="0.16" filter="url(#b1)"/>
<circle cx="487.40" cy="637.75" r="10.7" fill="url(#ltCapIn)" />
<line x1="487.88" y1="637.97" x2="479.47" y2="646.38" stroke="#0c0c0c" stroke-width="2.1" stroke-linecap="round"/>
<circle cx="470.30" cy="655.75" r="0.75" fill="#1a1a1a" />
<circle cx="504.90" cy="655.75" r="0.75" fill="#1a1a1a" />
<text x="487.60" y="671.05" font-size="10.2" fill="#161616" font-weight="700" text-anchor="middle" textLength="17.12" lengthAdjust="spacingAndGlyphs" >IN B</text>
<circle cx="549.70" cy="639.65" r="20.8" fill="#000" opacity="0.16" filter="url(#b2)"/>
<circle cx="549.70" cy="638.25" r="20.9" fill="#f0f0f0" />
<circle cx="549.70" cy="638.25" r="19.9" fill="#2a2a2a" />
<path d="M538.60 649.35A15.7 15.7 0 0 1 542.57 624.26" fill="none" stroke="#3fd69b" stroke-width="1.3" />
<circle cx="550.20" cy="639.45" r="14.3" fill="#000" opacity="0.3" filter="url(#b1)"/>
<circle cx="549.70" cy="638.25" r="14.4" fill="url(#ltCap)" />
<circle cx="550.20" cy="639.55" r="10.8" fill="#000" opacity="0.16" filter="url(#b1)"/>
<circle cx="549.50" cy="637.75" r="10.7" fill="url(#ltCapIn)" />
<line x1="549.88" y1="638.61" x2="544.48" y2="628.00" stroke="#0c0c0c" stroke-width="2.1" stroke-linecap="round"/>
<circle cx="532.40" cy="655.75" r="0.75" fill="#1a1a1a" />
<circle cx="567.00" cy="655.75" r="0.75" fill="#1a1a1a" />
<text x="549.70" y="671.05" font-size="10.2" fill="#161616" font-weight="700" text-anchor="middle" textLength="46.80" lengthAdjust="spacingAndGlyphs" >FEEDBACK</text>
<circle cx="612.30" cy="639.65" r="20.8" fill="#000" opacity="0.16" filter="url(#b2)"/>
<circle cx="612.30" cy="638.25" r="20.9" fill="#f0f0f0" />
<circle cx="612.30" cy="638.25" r="19.9" fill="#2a2a2a" />
<path d="M612.30 622.55A15.7 15.7 0 0 1 627.76 635.52" fill="none" stroke="#3fd69b" stroke-width="1.3" />
<circle cx="612.80" cy="639.45" r="14.3" fill="#000" opacity="0.3" filter="url(#b1)"/>
<circle cx="612.30" cy="638.25" r="14.4" fill="url(#ltCap)" />
<circle cx="612.80" cy="639.55" r="10.8" fill="#000" opacity="0.16" filter="url(#b1)"/>
<circle cx="612.10" cy="637.75" r="10.7" fill="url(#ltCapIn)" />
<line x1="611.91" y1="638.32" x2="623.63" y2="636.25" stroke="#0c0c0c" stroke-width="2.1" stroke-linecap="round"/>
<circle cx="595.00" cy="655.75" r="0.75" fill="#1a1a1a" />
<circle cx="629.60" cy="655.75" r="0.75" fill="#1a1a1a" />
<text x="612.30" y="671.05" font-size="10.2" fill="#161616" font-weight="700" text-anchor="middle" textLength="29.31" lengthAdjust="spacingAndGlyphs" >FILTER</text>
<circle cx="487.60" cy="714.45" r="20.8" fill="#000" opacity="0.16" filter="url(#b2)"/>
<circle cx="487.60" cy="713.05" r="20.9" fill="#f0f0f0" />
<circle cx="487.60" cy="713.05" r="19.9" fill="#2a2a2a" />
<path d="M476.50 724.15A15.7 15.7 0 0 1 488.53 697.38" fill="none" stroke="#3fd69b" stroke-width="1.3" />
<circle cx="488.10" cy="714.25" r="14.3" fill="#000" opacity="0.3" filter="url(#b1)"/>
<circle cx="487.60" cy="713.05" r="14.4" fill="url(#ltCap)" />
<circle cx="488.10" cy="714.35" r="10.8" fill="#000" opacity="0.16" filter="url(#b1)"/>
<circle cx="487.40" cy="712.55" r="10.7" fill="url(#ltCapIn)" />
<line x1="487.58" y1="713.45" x2="488.28" y2="701.57" stroke="#0c0c0c" stroke-width="2.1" stroke-linecap="round"/>
<circle cx="470.30" cy="730.55" r="0.75" fill="#1a1a1a" />
<circle cx="504.90" cy="730.55" r="0.75" fill="#1a1a1a" />
<text x="487.60" y="746.05" font-size="10.2" fill="#161616" font-weight="700" text-anchor="middle" textLength="16.80" lengthAdjust="spacingAndGlyphs" >IN A</text>
<circle cx="549.70" cy="714.45" r="20.8" fill="#000" opacity="0.16" filter="url(#b2)"/>
<circle cx="549.70" cy="713.05" r="20.9" fill="#f0f0f0" />
<circle cx="549.70" cy="713.05" r="19.9" fill="#2a2a2a" />
<path d="M538.60 724.15A15.7 15.7 0 0 1 556.34 698.82" fill="none" stroke="#3fd69b" stroke-width="1.3" />
<circle cx="550.20" cy="714.25" r="14.3" fill="#000" opacity="0.3" filter="url(#b1)"/>
<circle cx="549.70" cy="713.05" r="14.4" fill="url(#ltCap)" />
<circle cx="550.20" cy="714.35" r="10.8" fill="#000" opacity="0.16" filter="url(#b1)"/>
<circle cx="549.50" cy="712.55" r="10.7" fill="url(#ltCapIn)" />
<line x1="549.53" y1="713.41" x2="554.56" y2="702.63" stroke="#0c0c0c" stroke-width="2.1" stroke-linecap="round"/>
<circle cx="532.40" cy="730.55" r="0.75" fill="#1a1a1a" />
<circle cx="567.00" cy="730.55" r="0.75" fill="#1a1a1a" />
<text x="549.70" y="746.05" font-size="10.2" fill="#161616" font-weight="700" text-anchor="middle" textLength="65.00" lengthAdjust="spacingAndGlyphs" >TIME SYNCHED</text>
<circle cx="612.30" cy="714.45" r="20.8" fill="#000" opacity="0.16" filter="url(#b2)"/>
<circle cx="612.30" cy="713.05" r="20.9" fill="#f0f0f0" />
<circle cx="612.30" cy="713.05" r="19.9" fill="#2a2a2a" />
<path d="M601.20 724.15A15.7 15.7 0 1 1 624.50 722.93" fill="none" stroke="#3fd69b" stroke-width="1.3" />
<circle cx="612.80" cy="714.25" r="14.3" fill="#000" opacity="0.3" filter="url(#b1)"/>
<circle cx="612.30" cy="713.05" r="14.4" fill="url(#ltCap)" />
<circle cx="612.80" cy="714.35" r="10.8" fill="#000" opacity="0.16" filter="url(#b1)"/>
<circle cx="612.10" cy="712.55" r="10.7" fill="url(#ltCapIn)" />
<line x1="611.99" y1="712.80" x2="621.24" y2="720.29" stroke="#0c0c0c" stroke-width="2.1" stroke-linecap="round"/>
<circle cx="595.00" cy="730.55" r="0.75" fill="#1a1a1a" />
<circle cx="629.60" cy="730.55" r="0.75" fill="#1a1a1a" />
<text x="612.30" y="746.05" font-size="10.2" fill="#161616" font-weight="700" text-anchor="middle" textLength="34.60" lengthAdjust="spacingAndGlyphs" >STEREO</text>
<line x1="549.30" y1="750.70" x2="549.30" y2="763.00" stroke="#262626" stroke-width="1.5" stroke-dasharray="2.9 1.9"/>
<rect x="536.30" y="766.90" width="25.50" height="18.30" rx="9.1" fill="#3c3c3c" opacity="0.9" filter="url(#b1)"/>
<rect x="537.50" y="768.10" width="23.10" height="15.90" rx="7.9" fill="#27292a" />
<rect x="540.60" y="773.05" width="17.00" height="6.00" rx="3.00" fill="#35c08c" opacity="0.45" filter="url(#b2)"/>
<line x1="543.20" y1="776.05" x2="555.00" y2="776.05" stroke="#3dbd8b" stroke-width="1.5" stroke-linecap="round"/>
<rect x="596.10" y="768.00" width="33.20" height="17.80" rx="8.9" fill="#282828" />
<text x="612.70" y="779.95" font-size="10.2" fill="#ffffff" font-weight="700" text-anchor="middle" textLength="20.80" lengthAdjust="spacingAndGlyphs" >LINK</text>
<rect x="677.00" y="609.00" width="56.60" height="143.60" rx="4" fill="#b9b9b9" />
<rect x="677.00" y="582.20" width="44.60" height="17.60" rx="3.5" fill="#2a2a2a" />
<text x="699.30" y="594.30" font-size="10.2" fill="#ffffff" font-weight="700" text-anchor="middle" textLength="31.32" lengthAdjust="spacingAndGlyphs" >SEND 2</text>
<rect x="727.00" y="582.20" width="47.80" height="17.60" rx="3.5" fill="#6b6b6b" />
<text x="750.90" y="594.30" font-size="10.2" fill="#f0f0f0" font-weight="700" text-anchor="middle" textLength="36.13" lengthAdjust="spacingAndGlyphs" >REVERB</text>
<rect x="838.40" y="587.10" width="18.20" height="16.20" rx="8.1" fill="#000" opacity="0.42" filter="url(#b3)"/>
<rect x="835.10" y="582.80" width="19.80" height="17.80" rx="8.9" fill="#f6f6f6" filter="url(#s1)"/>
<rect x="835.90" y="583.60" width="19.40" height="17.40" rx="8.7" fill="#8a8a8a" opacity="0.6" filter="url(#s1)"/>
<rect x="836.20" y="583.90" width="18.20" height="16.20" rx="7.8" fill="#27292a" />
<rect x="839.50" y="589.50" width="11.60" height="5.00" rx="2.50" fill="#35c08c" opacity="0.38" filter="url(#b2)"/>
<line x1="842.00" y1="592.00" x2="848.60" y2="592.00" stroke="#3dbd8b" stroke-width="1.7" stroke-linecap="butt"/>
<line x1="841.60" y1="592.00" x2="849.00" y2="592.00" stroke="#3dbd8b" stroke-width="1.1" stroke-linecap="round"/>
<circle cx="705.30" cy="639.65" r="20.8" fill="#000" opacity="0.16" filter="url(#b2)"/>
<circle cx="705.30" cy="638.25" r="20.9" fill="#f0f0f0" />
<circle cx="705.30" cy="638.25" r="19.9" fill="#2a2a2a" />
<path d="M694.20 649.35A15.7 15.7 0 1 1 716.97 648.76" fill="none" stroke="#3fd69b" stroke-width="1.3" />
<circle cx="705.80" cy="639.45" r="14.3" fill="#000" opacity="0.3" filter="url(#b1)"/>
<circle cx="705.30" cy="638.25" r="14.4" fill="url(#ltCap)" />
<circle cx="705.80" cy="639.55" r="10.8" fill="#000" opacity="0.16" filter="url(#b1)"/>
<circle cx="705.10" cy="637.75" r="10.7" fill="url(#ltCapIn)" />
<line x1="705.00" y1="637.98" x2="713.85" y2="645.95" stroke="#0c0c0c" stroke-width="2.1" stroke-linecap="round"/>
<circle cx="688.00" cy="655.75" r="0.75" fill="#1a1a1a" />
<circle cx="722.60" cy="655.75" r="0.75" fill="#1a1a1a" />
<text x="705.30" y="671.05" font-size="10.2" fill="#161616" font-weight="700" text-anchor="middle" textLength="17.12" lengthAdjust="spacingAndGlyphs" >IN B</text>
<circle cx="767.40" cy="639.65" r="20.8" fill="#000" opacity="0.16" filter="url(#b2)"/>
<circle cx="767.40" cy="638.25" r="20.9" fill="#f0f0f0" />
<circle cx="767.40" cy="638.25" r="19.9" fill="#2a2a2a" />
<path d="M756.30 649.35A15.7 15.7 0 0 1 765.08 622.72" fill="none" stroke="#3fd69b" stroke-width="1.3" />
<circle cx="767.90" cy="639.45" r="14.3" fill="#000" opacity="0.3" filter="url(#b1)"/>
<circle cx="767.40" cy="638.25" r="14.4" fill="url(#ltCap)" />
<circle cx="767.90" cy="639.55" r="10.8" fill="#000" opacity="0.16" filter="url(#b1)"/>
<circle cx="767.20" cy="637.75" r="10.7" fill="url(#ltCapIn)" />
<line x1="767.46" y1="638.65" x2="765.70" y2="626.88" stroke="#0c0c0c" stroke-width="2.1" stroke-linecap="round"/>
<circle cx="750.10" cy="655.75" r="0.75" fill="#1a1a1a" />
<circle cx="784.70" cy="655.75" r="0.75" fill="#1a1a1a" />
<text x="767.40" y="671.05" font-size="10.2" fill="#161616" font-weight="700" text-anchor="middle" textLength="41.40" lengthAdjust="spacingAndGlyphs" >INPUT HP</text>
<circle cx="830.00" cy="639.65" r="20.8" fill="#000" opacity="0.16" filter="url(#b2)"/>
<circle cx="830.00" cy="638.25" r="20.9" fill="#f0f0f0" />
<circle cx="830.00" cy="638.25" r="19.9" fill="#2a2a2a" />
<path d="M818.90 649.35A15.7 15.7 0 0 1 834.06 623.08" fill="none" stroke="#3fd69b" stroke-width="1.3" />
<circle cx="830.50" cy="639.45" r="14.3" fill="#000" opacity="0.3" filter="url(#b1)"/>
<circle cx="830.00" cy="638.25" r="14.4" fill="url(#ltCap)" />
<circle cx="830.50" cy="639.55" r="10.8" fill="#000" opacity="0.16" filter="url(#b1)"/>
<circle cx="829.80" cy="637.75" r="10.7" fill="url(#ltCapIn)" />
<line x1="829.90" y1="638.64" x2="832.98" y2="627.14" stroke="#0c0c0c" stroke-width="2.1" stroke-linecap="round"/>
<circle cx="812.70" cy="655.75" r="0.75" fill="#1a1a1a" />
<circle cx="847.30" cy="655.75" r="0.75" fill="#1a1a1a" />
<text x="830.00" y="671.05" font-size="10.2" fill="#161616" font-weight="700" text-anchor="middle" textLength="29.49" lengthAdjust="spacingAndGlyphs" >SHAPE</text>
<circle cx="705.30" cy="714.45" r="20.8" fill="#000" opacity="0.16" filter="url(#b2)"/>
<circle cx="705.30" cy="713.05" r="20.9" fill="#f0f0f0" />
<circle cx="705.30" cy="713.05" r="19.9" fill="#2a2a2a" />
<circle cx="705.80" cy="714.25" r="14.3" fill="#000" opacity="0.3" filter="url(#b1)"/>
<circle cx="705.30" cy="713.05" r="14.4" fill="url(#ltCap)" />
<circle cx="705.80" cy="714.35" r="10.8" fill="#000" opacity="0.16" filter="url(#b1)"/>
<circle cx="705.10" cy="712.55" r="10.7" fill="url(#ltCapIn)" />
<line x1="705.58" y1="712.77" x2="697.17" y2="721.18" stroke="#0c0c0c" stroke-width="2.1" stroke-linecap="round"/>
<circle cx="688.00" cy="730.55" r="0.75" fill="#1a1a1a" />
<circle cx="722.60" cy="730.55" r="0.75" fill="#1a1a1a" />
<text x="705.30" y="746.05" font-size="10.2" fill="#161616" font-weight="700" text-anchor="middle" textLength="16.80" lengthAdjust="spacingAndGlyphs" >IN A</text>
<circle cx="767.40" cy="714.45" r="20.8" fill="#000" opacity="0.16" filter="url(#b2)"/>
<circle cx="767.40" cy="713.05" r="20.9" fill="#f0f0f0" />
<circle cx="767.40" cy="713.05" r="19.9" fill="#2a2a2a" />
<path d="M756.30 724.15A15.7 15.7 0 0 1 775.72 699.74" fill="none" stroke="#3fd69b" stroke-width="1.3" />
<circle cx="767.90" cy="714.25" r="14.3" fill="#000" opacity="0.3" filter="url(#b1)"/>
<circle cx="767.40" cy="713.05" r="14.4" fill="url(#ltCap)" />
<circle cx="767.90" cy="714.35" r="10.8" fill="#000" opacity="0.16" filter="url(#b1)"/>
<circle cx="767.20" cy="712.55" r="10.7" fill="url(#ltCapIn)" />
<line x1="767.19" y1="713.39" x2="773.49" y2="703.30" stroke="#0c0c0c" stroke-width="2.1" stroke-linecap="round"/>
<circle cx="750.10" cy="730.55" r="0.75" fill="#1a1a1a" />
<circle cx="784.70" cy="730.55" r="0.75" fill="#1a1a1a" />
<text x="767.40" y="746.05" font-size="10.2" fill="#161616" font-weight="700" text-anchor="middle" textLength="29.17" lengthAdjust="spacingAndGlyphs" >DECAY</text>
<circle cx="830.00" cy="714.45" r="20.8" fill="#000" opacity="0.16" filter="url(#b2)"/>
<circle cx="830.00" cy="713.05" r="20.9" fill="#f0f0f0" />
<circle cx="830.00" cy="713.05" r="19.9" fill="#2a2a2a" />
<circle cx="830.50" cy="714.25" r="14.3" fill="#000" opacity="0.3" filter="url(#b1)"/>
<circle cx="830.00" cy="713.05" r="14.4" fill="url(#ltCap)" />
<circle cx="830.50" cy="714.35" r="10.8" fill="#000" opacity="0.16" filter="url(#b1)"/>
<circle cx="829.80" cy="712.55" r="10.7" fill="url(#ltCapIn)" />
<line x1="830.28" y1="712.77" x2="821.87" y2="721.18" stroke="#0c0c0c" stroke-width="2.1" stroke-linecap="round"/>
<circle cx="812.70" cy="730.55" r="0.75" fill="#1a1a1a" />
<circle cx="847.30" cy="730.55" r="0.75" fill="#1a1a1a" />
<text x="830.00" y="746.05" font-size="10.2" fill="#161616" font-weight="700" text-anchor="middle" textLength="49.40" lengthAdjust="spacingAndGlyphs" >PRE-DELAY</text>
<rect x="894.00" y="582.20" width="40.80" height="17.60" rx="3.5" fill="#2a2a2a" />
<text x="914.40" y="594.30" font-size="10.2" fill="#ffffff" font-weight="700" text-anchor="middle" textLength="27.46" lengthAdjust="spacingAndGlyphs" >MIXER</text>
<rect x="1056.80" y="587.10" width="18.20" height="16.20" rx="8.1" fill="#000" opacity="0.42" filter="url(#b3)"/>
<rect x="1053.50" y="582.80" width="19.80" height="17.80" rx="8.9" fill="#f6f6f6" filter="url(#s1)"/>
<rect x="1054.30" y="583.60" width="19.40" height="17.40" rx="8.7" fill="#8a8a8a" opacity="0.6" filter="url(#s1)"/>
<rect x="1054.60" y="583.90" width="18.20" height="16.20" rx="7.8" fill="#27292a" />
<rect x="1057.90" y="589.50" width="11.60" height="5.00" rx="2.50" fill="#35c08c" opacity="0.38" filter="url(#b2)"/>
<line x1="1060.40" y1="592.00" x2="1067.00" y2="592.00" stroke="#3dbd8b" stroke-width="1.7" stroke-linecap="butt"/>
<line x1="1060.00" y1="592.00" x2="1067.40" y2="592.00" stroke="#3dbd8b" stroke-width="1.1" stroke-linecap="round"/>
<circle cx="922.70" cy="639.65" r="20.8" fill="#000" opacity="0.16" filter="url(#b2)"/>
<circle cx="922.70" cy="638.25" r="20.9" fill="#f0f0f0" />
<circle cx="922.70" cy="638.25" r="19.9" fill="#2a2a2a" />
<path d="M911.60 649.35A15.7 15.7 0 1 1 938.16 635.52" fill="none" stroke="#3fd69b" stroke-width="1.3" />
<circle cx="923.20" cy="639.45" r="14.3" fill="#000" opacity="0.3" filter="url(#b1)"/>
<circle cx="922.70" cy="638.25" r="14.4" fill="url(#ltCap)" />
<circle cx="923.20" cy="639.55" r="10.8" fill="#000" opacity="0.16" filter="url(#b1)"/>
<circle cx="922.50" cy="637.75" r="10.7" fill="url(#ltCapIn)" />
<line x1="922.31" y1="638.32" x2="934.03" y2="636.25" stroke="#0c0c0c" stroke-width="2.1" stroke-linecap="round"/>
<circle cx="905.40" cy="655.75" r="0.75" fill="#1a1a1a" />
<circle cx="940.00" cy="655.75" r="0.75" fill="#1a1a1a" />
<text x="922.70" y="671.05" font-size="10.2" fill="#161616" font-weight="700" text-anchor="middle" textLength="6.18" lengthAdjust="spacingAndGlyphs" >A</text>
<circle cx="984.80" cy="639.65" r="20.8" fill="#000" opacity="0.16" filter="url(#b2)"/>
<circle cx="984.80" cy="638.25" r="20.9" fill="#f0f0f0" />
<circle cx="984.80" cy="638.25" r="19.9" fill="#2a2a2a" />
<path d="M973.70 649.35A15.7 15.7 0 1 1 1000.26 635.52" fill="none" stroke="#3fd69b" stroke-width="1.3" />
<circle cx="985.30" cy="639.45" r="14.3" fill="#000" opacity="0.3" filter="url(#b1)"/>
<circle cx="984.80" cy="638.25" r="14.4" fill="url(#ltCap)" />
<circle cx="985.30" cy="639.55" r="10.8" fill="#000" opacity="0.16" filter="url(#b1)"/>
<circle cx="984.60" cy="637.75" r="10.7" fill="url(#ltCapIn)" />
<line x1="984.41" y1="638.32" x2="996.13" y2="636.25" stroke="#0c0c0c" stroke-width="2.1" stroke-linecap="round"/>
<circle cx="967.50" cy="655.75" r="0.75" fill="#1a1a1a" />
<circle cx="1002.10" cy="655.75" r="0.75" fill="#1a1a1a" />
<text x="984.80" y="671.05" font-size="10.2" fill="#161616" font-weight="700" text-anchor="middle" textLength="6.18" lengthAdjust="spacingAndGlyphs" >B</text>
<circle cx="1047.40" cy="639.65" r="20.8" fill="#000" opacity="0.16" filter="url(#b2)"/>
<circle cx="1047.40" cy="638.25" r="20.9" fill="#f0f0f0" />
<circle cx="1047.40" cy="638.25" r="19.9" fill="#2a2a2a" />
<path d="M1036.30 649.35A15.7 15.7 0 1 1 1061.51 631.37" fill="none" stroke="#3fd69b" stroke-width="1.3" />
<circle cx="1047.90" cy="639.45" r="14.3" fill="#000" opacity="0.3" filter="url(#b1)"/>
<circle cx="1047.40" cy="638.25" r="14.4" fill="url(#ltCap)" />
<circle cx="1047.90" cy="639.55" r="10.8" fill="#000" opacity="0.16" filter="url(#b1)"/>
<circle cx="1047.20" cy="637.75" r="10.7" fill="url(#ltCapIn)" />
<line x1="1047.04" y1="638.43" x2="1057.74" y2="633.21" stroke="#0c0c0c" stroke-width="2.1" stroke-linecap="round"/>
<circle cx="1030.10" cy="655.75" r="0.75" fill="#1a1a1a" />
<circle cx="1064.70" cy="655.75" r="0.75" fill="#1a1a1a" />
<text x="1047.40" y="671.05" font-size="10.2" fill="#161616" font-weight="700" text-anchor="middle" textLength="36.40" lengthAdjust="spacingAndGlyphs" >VOLUME</text>
<circle cx="922.70" cy="714.45" r="20.8" fill="#000" opacity="0.16" filter="url(#b2)"/>
<circle cx="922.70" cy="713.05" r="20.9" fill="#f0f0f0" />
<circle cx="922.70" cy="713.05" r="19.9" fill="#2a2a2a" />
<path d="M911.60 724.15A15.7 15.7 0 1 1 934.18 702.34" fill="none" stroke="#3fd69b" stroke-width="1.3" />
<circle cx="923.20" cy="714.25" r="14.3" fill="#000" opacity="0.3" filter="url(#b1)"/>
<circle cx="922.70" cy="713.05" r="14.4" fill="url(#ltCap)" />
<circle cx="923.20" cy="714.35" r="10.8" fill="#000" opacity="0.16" filter="url(#b1)"/>
<circle cx="922.50" cy="712.55" r="10.7" fill="url(#ltCapIn)" />
<line x1="922.41" y1="713.32" x2="931.11" y2="705.21" stroke="#0c0c0c" stroke-width="2.1" stroke-linecap="round"/>
<circle cx="905.40" cy="730.55" r="0.75" fill="#1a1a1a" />
<circle cx="940.00" cy="730.55" r="0.75" fill="#1a1a1a" />
<text x="922.70" y="746.05" font-size="10.2" fill="#161616" font-weight="700" text-anchor="middle" textLength="43.40" lengthAdjust="spacingAndGlyphs" >RETURN 1</text>
<circle cx="984.80" cy="714.45" r="20.8" fill="#000" opacity="0.16" filter="url(#b2)"/>
<circle cx="984.80" cy="713.05" r="20.9" fill="#f0f0f0" />
<circle cx="984.80" cy="713.05" r="19.9" fill="#2a2a2a" />
<path d="M973.70 724.15A15.7 15.7 0 1 1 996.38 702.44" fill="none" stroke="#3fd69b" stroke-width="1.3" />
<circle cx="985.30" cy="714.25" r="14.3" fill="#000" opacity="0.3" filter="url(#b1)"/>
<circle cx="984.80" cy="713.05" r="14.4" fill="url(#ltCap)" />
<circle cx="985.30" cy="714.35" r="10.8" fill="#000" opacity="0.16" filter="url(#b1)"/>
<circle cx="984.60" cy="712.55" r="10.7" fill="url(#ltCapIn)" />
<line x1="984.51" y1="713.32" x2="993.28" y2="705.28" stroke="#0c0c0c" stroke-width="2.1" stroke-linecap="round"/>
<circle cx="967.50" cy="730.55" r="0.75" fill="#1a1a1a" />
<circle cx="1002.10" cy="730.55" r="0.75" fill="#1a1a1a" />
<text x="984.80" y="746.05" font-size="10.2" fill="#161616" font-weight="700" text-anchor="middle" textLength="44.00" lengthAdjust="spacingAndGlyphs" >RETURN 2</text>
<circle cx="1047.40" cy="714.45" r="20.8" fill="#000" opacity="0.16" filter="url(#b2)"/>
<circle cx="1047.40" cy="713.05" r="20.9" fill="#f0f0f0" />
<circle cx="1047.40" cy="713.05" r="19.9" fill="#2a2a2a" />
<path d="M1036.30 724.15A15.7 15.7 0 0 1 1047.40 697.35" fill="none" stroke="#3fd69b" stroke-width="1.3" />
<circle cx="1047.90" cy="714.25" r="14.3" fill="#000" opacity="0.3" filter="url(#b1)"/>
<circle cx="1047.40" cy="713.05" r="14.4" fill="url(#ltCap)" />
<circle cx="1047.90" cy="714.35" r="10.8" fill="#000" opacity="0.16" filter="url(#b1)"/>
<circle cx="1047.20" cy="712.55" r="10.7" fill="url(#ltCapIn)" />
<line x1="1047.40" y1="713.45" x2="1047.40" y2="701.55" stroke="#0c0c0c" stroke-width="2.1" stroke-linecap="round"/>
<circle cx="1030.10" cy="730.55" r="0.75" fill="#1a1a1a" />
<circle cx="1064.70" cy="730.55" r="0.75" fill="#1a1a1a" />
<text x="1047.40" y="746.05" font-size="10.2" fill="#161616" font-weight="700" text-anchor="middle" textLength="44.60" lengthAdjust="spacingAndGlyphs" >DRY / WET</text>
<rect x="894.00" y="768.80" width="181.80" height="15.30" rx="3.8" fill="#242424" />
<rect x="896.00" y="770.60" width="177.80" height="11.70" rx="2.2" fill="#3a3a3a" />
<rect x="898.00" y="772.80" width="174.00" height="2.10" rx="0.5" fill="#6c6c6c" />
<rect x="898.00" y="776.70" width="174.00" height="2.20" rx="0.5" fill="#6c6c6c" />
<path d="M23.9 542V555.5a5.5 5.5 0 0 0 5.5 5.5H105.5a5.5 5.5 0 0 1 5.5 5.5V575" fill="none" stroke="#9a9a9a" stroke-width="1.9"/>
<path d="M1076.5 542V555.5a5.5 5.5 0 0 1 -5.5 5.5H447.5a6 6 0 0 0 -6 6V612a4 4 0 0 0 3 4" fill="none" stroke="#9a9a9a" stroke-width="1.9"/>
<path d="M658.3 561V612a4 4 0 0 0 3 4" fill="none" stroke="#9a9a9a" stroke-width="1.9"/>
<path d="M330 809.5a4 4 0 0 0 3.5 3H652.3a6 6 0 0 0 6 -6V731a7 7 0 0 1 6 -6.8" fill="none" stroke="#9a9a9a" stroke-width="1.9"/>
<path d="M441.8 812.5V732a7 7 0 0 1 6 -6.8" fill="none" stroke="#9a9a9a" stroke-width="1.9"/>
<line x1="213.00" y1="776.80" x2="232.00" y2="776.80" stroke="#9a9a9a" stroke-width="1.9" />
<line x1="649.00" y1="776.60" x2="666.00" y2="776.60" stroke="#ffffff" stroke-width="0" />
<circle cx="111.00" cy="579.00" r="5.1" fill="#f6f6f6" />
<circle cx="111.00" cy="579.00" r="2.9" fill="#ffffff" stroke="#141414" stroke-width="2.0"/>
<circle cx="209.60" cy="776.80" r="5.1" fill="#f6f6f6" />
<circle cx="209.60" cy="776.80" r="2.9" fill="#ffffff" stroke="#141414" stroke-width="2.0"/>
<circle cx="235.40" cy="776.80" r="5.1" fill="#f6f6f6" />
<circle cx="235.40" cy="776.80" r="2.9" fill="#ffffff" stroke="#141414" stroke-width="2.0"/>
<circle cx="327.40" cy="807.00" r="5.1" fill="#f6f6f6" />
<circle cx="327.40" cy="807.00" r="2.9" fill="#ffffff" stroke="#141414" stroke-width="2.0"/>
<circle cx="447.60" cy="620.80" r="5.1" fill="#f6f6f6" />
<circle cx="447.60" cy="620.80" r="2.9" fill="#ffffff" stroke="#141414" stroke-width="2.0"/>
<circle cx="450.60" cy="722.80" r="5.1" fill="#f6f6f6" />
<circle cx="450.60" cy="722.80" r="2.9" fill="#ffffff" stroke="#141414" stroke-width="2.0"/>
<circle cx="646.20" cy="776.80" r="5.1" fill="#f6f6f6" />
<circle cx="646.20" cy="776.80" r="2.9" fill="#ffffff" stroke="#141414" stroke-width="2.0"/>
<circle cx="669.90" cy="776.80" r="5.1" fill="#f6f6f6" />
<circle cx="669.90" cy="776.80" r="2.9" fill="#ffffff" stroke="#141414" stroke-width="2.0"/>
<circle cx="664.10" cy="621.10" r="5.1" fill="#f6f6f6" />
<circle cx="664.10" cy="621.10" r="2.9" fill="#ffffff" stroke="#141414" stroke-width="2.0"/>
<circle cx="667.00" cy="722.40" r="5.1" fill="#f6f6f6" />
<circle cx="667.00" cy="722.40" r="2.9" fill="#ffffff" stroke="#141414" stroke-width="2.0"/>
</svg>
</body></html>
